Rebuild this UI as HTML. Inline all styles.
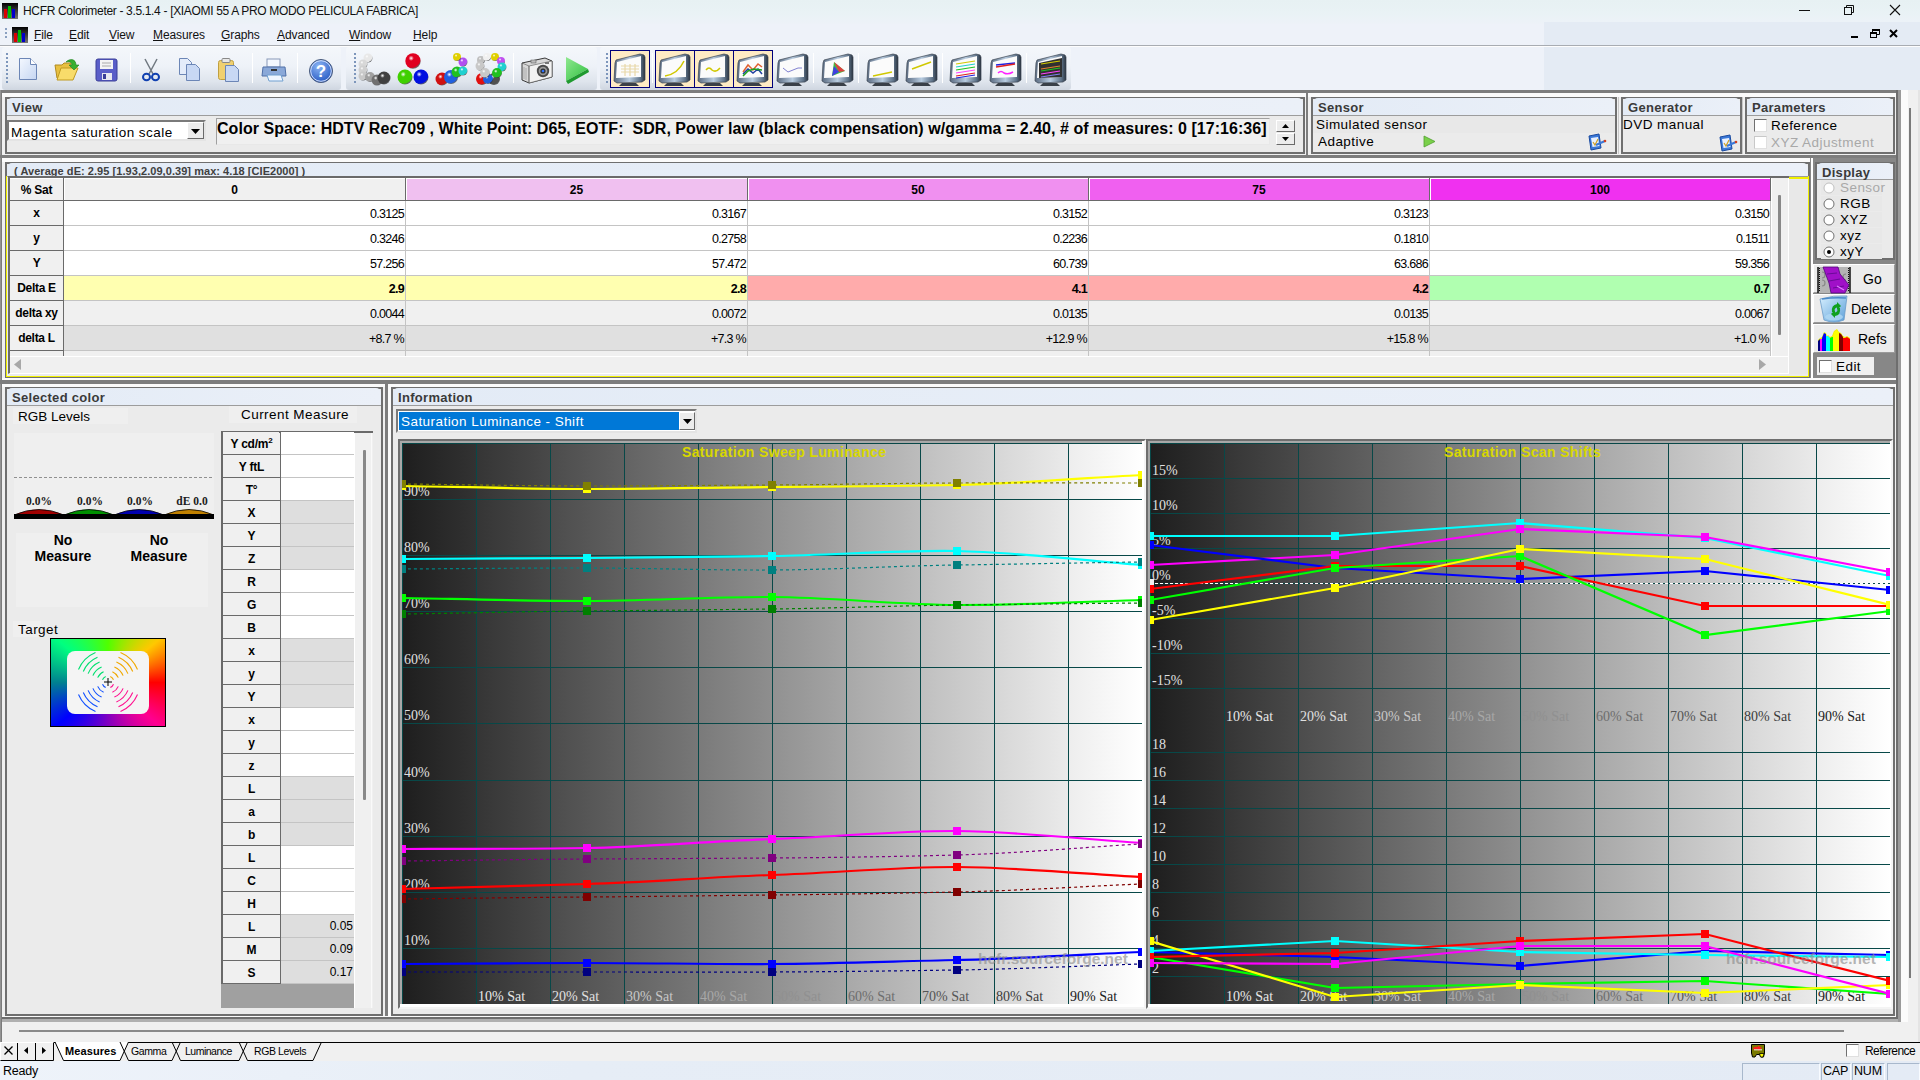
<!DOCTYPE html>
<html><head><meta charset="utf-8"><title>HCFR</title>
<style>
html,body{margin:0;padding:0;}
body{width:1920px;height:1080px;position:relative;overflow:hidden;background:#f0f0f0;font-family:'Liberation Sans', sans-serif;font-size:13px;color:#000;}
div{box-sizing:border-box;}
.u{text-decoration:underline;}
</style></head><body>
<div style="position:absolute;left:0px;top:0px;width:1920px;height:24px;background:linear-gradient(#e7f1f3,#e9f2f5 50%,#edf2f8);"></div><svg style="position:absolute;left:2px;top:3px" width="16" height="16" viewBox="0 0 16 16"><defs><linearGradient id="ig" x1="0" y1="0" x2="0" y2="1"><stop offset="0" stop-color="#000"/><stop offset="1" stop-color="#777"/></linearGradient></defs><rect x="0" y="0" width="16" height="16" fill="url(#ig)"/><rect x="2" y="6" width="3" height="9" fill="#d00"/><rect x="6" y="3" width="3" height="12" fill="#0b0"/><rect x="10" y="6" width="3" height="9" fill="#00c"/></svg><div style="position:absolute;left:23px;top:3px;white-space:nowrap;font-size:12px;letter-spacing:-0.33px;color:#111;top:4px;">HCFR Colorimeter - 3.5.1.4 - [XIAOMI 55 A PRO MODO PELICULA FABRICA]</div><svg style="position:absolute;left:1790px;top:0" width="130" height="22" viewBox="0 0 130 22"><line x1="9" y1="10.5" x2="20" y2="10.5" stroke="#111" stroke-width="1"/><rect x="54.5" y="7.5" width="7" height="7" fill="none" stroke="#111"/><path d="M56.5 7.5 V5.5 H63.5 V12.5 H61.5" fill="none" stroke="#111"/><path d="M100 5 L110 15 M110 5 L100 15" stroke="#111" stroke-width="1.1"/></svg><div style="position:absolute;left:0px;top:24px;width:1920px;height:21px;background:#eef2f9;"></div><div style="position:absolute;left:1544px;top:22px;width:376px;height:23px;background:#e4ebf4;"></div><div style="position:absolute;left:0px;top:45px;width:1920px;height:1px;background:#a8acb2;"></div><div style="position:absolute;left:0px;top:46px;width:1920px;height:1px;background:#fdfdfd;"></div><div style="position:absolute;left:5px;top:28px;width:2px;height:12px;background:repeating-linear-gradient(#8aa0c0 0 2px,transparent 2px 4px);"></div><svg style="position:absolute;left:12px;top:27px" width="16" height="16" viewBox="0 0 16 16"><defs><linearGradient id="ig" x1="0" y1="0" x2="0" y2="1"><stop offset="0" stop-color="#000"/><stop offset="1" stop-color="#777"/></linearGradient></defs><rect x="0" y="0" width="16" height="16" fill="url(#ig)"/><rect x="2" y="6" width="3" height="9" fill="#d00"/><rect x="6" y="3" width="3" height="12" fill="#0b0"/><rect x="10" y="6" width="3" height="9" fill="#00c"/></svg><div style="position:absolute;left:34px;top:28px;white-space:nowrap;font-size:12px;letter-spacing:-0.1px;color:#111;"><span class="u">F</span>ile</div><div style="position:absolute;left:69px;top:28px;white-space:nowrap;font-size:12px;letter-spacing:-0.1px;color:#111;"><span class="u">E</span>dit</div><div style="position:absolute;left:109px;top:28px;white-space:nowrap;font-size:12px;letter-spacing:-0.1px;color:#111;"><span class="u">V</span>iew</div><div style="position:absolute;left:153px;top:28px;white-space:nowrap;font-size:12px;letter-spacing:-0.1px;color:#111;"><span class="u">M</span>easures</div><div style="position:absolute;left:221px;top:28px;white-space:nowrap;font-size:12px;letter-spacing:-0.1px;color:#111;"><span class="u">G</span>raphs</div><div style="position:absolute;left:277px;top:28px;white-space:nowrap;font-size:12px;letter-spacing:-0.1px;color:#111;"><span class="u">A</span>dvanced</div><div style="position:absolute;left:349px;top:28px;white-space:nowrap;font-size:12px;letter-spacing:-0.1px;color:#111;"><span class="u">W</span>indow</div><div style="position:absolute;left:413px;top:28px;white-space:nowrap;font-size:12px;letter-spacing:-0.1px;color:#111;"><span class="u">H</span>elp</div><svg style="position:absolute;left:1845px;top:26" width="60" height="16" viewBox="0 0 60 16"><rect x="6" y="10" width="7" height="2" fill="#000"/><rect x="25.5" y="6.5" width="6" height="5" fill="none" stroke="#000"/><rect x="25" y="6" width="7" height="2" fill="#000"/><path d="M27.5 6 V3.5 H34.5 V8.5 H32" fill="none" stroke="#000"/><rect x="27" y="3" width="8" height="2" fill="#000"/><path d="M45 4 L52 11 M52 4 L45 11" stroke="#000" stroke-width="2"/></svg><div style="position:absolute;left:0px;top:47px;width:1920px;height:43px;background:#eef2f9;"></div><div style="position:absolute;left:1544px;top:47px;width:376px;height:43px;background:#e4ebf4;"></div><div style="position:absolute;left:2px;top:47px;width:339px;height:43px;background:linear-gradient(#f4f7fb 0%,#eef2f8 45%,#dfe5ed 80%,#cfd6e0 100%);border-radius:3px;"></div><div style="position:absolute;left:346px;top:47px;width:251px;height:43px;background:linear-gradient(#f4f7fb 0%,#eef2f8 45%,#dfe5ed 80%,#cfd6e0 100%);border-radius:3px;"></div><div style="position:absolute;left:600px;top:47px;width:471px;height:43px;background:linear-gradient(#f4f7fb 0%,#eef2f8 45%,#dfe5ed 80%,#cfd6e0 100%);border-radius:3px;"></div><div style="position:absolute;left:6px;top:53px;width:2px;height:30px;background:repeating-linear-gradient(#7d96bb 0 2px,transparent 2px 4px);"></div><div style="position:absolute;left:354px;top:53px;width:2px;height:30px;background:repeating-linear-gradient(#7d96bb 0 2px,transparent 2px 4px);"></div><div style="position:absolute;left:606px;top:53px;width:2px;height:30px;background:repeating-linear-gradient(#7d96bb 0 2px,transparent 2px 4px);"></div><div style="position:absolute;left:130px;top:53px;width:1px;height:30px;background:#c5ccd6;border-right:1px solid #fff;"></div><div style="position:absolute;left:252px;top:53px;width:1px;height:30px;background:#c5ccd6;border-right:1px solid #fff;"></div><div style="position:absolute;left:297px;top:53px;width:1px;height:30px;background:#c5ccd6;border-right:1px solid #fff;"></div><div style="position:absolute;left:513px;top:53px;width:1px;height:30px;background:#c5ccd6;border-right:1px solid #fff;"></div><div style="position:absolute;left:652px;top:53px;width:1px;height:30px;background:#c5ccd6;border-right:1px solid #fff;"></div><div style="position:absolute;left:813px;top:53px;width:1px;height:30px;background:#c5ccd6;border-right:1px solid #fff;"></div><div style="position:absolute;left:858px;top:53px;width:1px;height:30px;background:#c5ccd6;border-right:1px solid #fff;"></div><div style="position:absolute;left:942px;top:53px;width:1px;height:30px;background:#c5ccd6;border-right:1px solid #fff;"></div><div style="position:absolute;left:1026px;top:53px;width:1px;height:30px;background:#c5ccd6;border-right:1px solid #fff;"></div><div style="position:absolute;left:0px;top:90px;width:1920px;height:3px;background:#7d7d7d;"></div><div style="position:absolute;left:0px;top:93px;width:1920px;height:4px;background:#fbfbfb;"></div><svg style="position:absolute;left:18px;top:57px" width="20" height="24" viewBox="0 0 20 24"><defs><linearGradient id="nd" x1="0" y1="0" x2="1" y2="1"><stop offset="0" stop-color="#f4f8ff"/><stop offset="1" stop-color="#c5d6f2"/></linearGradient></defs><path d="M1.5 1.5 H12.5 L18.5 7.5 V22.5 H1.5 Z" fill="url(#nd)" stroke="#6c86b6"/><path d="M12.5 1.5 V7.5 H18.5" fill="#fff" stroke="#6c86b6"/></svg><svg style="position:absolute;left:54px;top:58px" width="26" height="24" viewBox="0 0 26 24"><path d="M1 7 H8 L10 5 H17 V20 H3 Z" fill="#e8c040" stroke="#b08a20"/><path d="M3 22 L7 10 H24 L19 22 Z" fill="#f8dc6a" stroke="#c09a20"/><path d="M12 4 C16 0 22 1 22 7 L25 7 L20 12 L15 7 L18 7 C18 4 15 3 12 4 Z" fill="#38b030" stroke="#208020" stroke-width="0.6"/></svg><svg style="position:absolute;left:95px;top:58px" width="24" height="24" viewBox="0 0 24 24"><rect x="1" y="1" width="21" height="22" rx="2" fill="#5a5ec8" stroke="#3a3e98"/><rect x="5" y="2" width="13" height="9" fill="#f4f4f4"/><line x1="7" y1="5" x2="16" y2="5" stroke="#aaa"/><line x1="7" y1="8" x2="16" y2="8" stroke="#aaa"/><rect x="7" y="15" width="10" height="7" fill="#e8e8f0"/><rect x="8" y="16" width="3" height="5" fill="#3a3e98"/></svg><svg style="position:absolute;left:141px;top:58px" width="20" height="24" viewBox="0 0 20 24"><path d="M4 1 L12 16 M16 1 L8 16" stroke="#707880" stroke-width="1.5"/><ellipse cx="5.5" cy="19" rx="3.5" ry="3.3" fill="none" stroke="#1040b0" stroke-width="2"/><ellipse cx="14.5" cy="19" rx="3.5" ry="3.3" fill="none" stroke="#1040b0" stroke-width="2"/></svg><svg style="position:absolute;left:178px;top:57px" width="24" height="26" viewBox="0 0 24 26"><path d="M1.5 1.5 H9.5 L13.5 5.5 V17.5 H1.5 Z" fill="#e4ecfa" stroke="#6c86b6"/><path d="M8.5 7.5 H17.5 L21.5 11.5 V23.5 H8.5 Z" fill="#c8d8f4" stroke="#6c86b6"/></svg><svg style="position:absolute;left:217px;top:57px" width="24" height="26" viewBox="0 0 24 26"><rect x="1.5" y="3.5" width="15" height="19" rx="2" fill="#f0d070" stroke="#c0a040"/><rect x="5" y="1.5" width="8" height="4" rx="1" fill="#e8e8e8" stroke="#888"/><path d="M8.5 8.5 H17.5 L21.5 12.5 V24.5 H8.5 Z" fill="#c8d8f4" stroke="#6c86b6"/></svg><svg style="position:absolute;left:261px;top:58px" width="26" height="24" viewBox="0 0 26 24"><rect x="6" y="1" width="13" height="8" fill="#f4f8ff" stroke="#8898b8"/><path d="M2 9 H24 L25 18 H1 Z" fill="#8aa8d8" stroke="#5070a8"/><rect x="10" y="11" width="6" height="2" fill="#333"/><path d="M6 17 H20 L22 23 H8 Z" fill="#f0f6ff" stroke="#70a0d0"/></svg><svg style="position:absolute;left:308px;top:58px" width="26" height="26" viewBox="0 0 26 26"><defs><radialGradient id="hg" cx="0.4" cy="0.3" r="0.7"><stop offset="0" stop-color="#8ab4f4"/><stop offset="1" stop-color="#2a5cc4"/></radialGradient></defs><circle cx="13" cy="13" r="11.5" fill="url(#hg)" stroke="#4a5a78"/><circle cx="13" cy="13" r="10.3" fill="none" stroke="#dce8ff" stroke-width="0.9"/><text x="13" y="19" font-family="'Liberation Sans', sans-serif" font-weight="bold" font-size="17" fill="#fff" text-anchor="middle">?</text></svg><svg style="position:absolute;left:357px;top:53px" width="34" height="34" viewBox="0 0 34 34"><defs><radialGradient id="bl1" cx="0.38" cy="0.32" r="0.7"><stop offset="0" stop-color="#fff"/><stop offset="0.25" stop-color="#e8e8e8"/><stop offset="0.85" stop-color="#e8e8e8"/><stop offset="1" stop-color="#222" stop-opacity="0.6"/></radialGradient></defs><circle cx="11" cy="5" r="4.5" fill="url(#bl1)"/><defs><radialGradient id="bl2" cx="0.38" cy="0.32" r="0.7"><stop offset="0" stop-color="#fff"/><stop offset="0.25" stop-color="#d8d8d8"/><stop offset="0.85" stop-color="#d8d8d8"/><stop offset="1" stop-color="#222" stop-opacity="0.6"/></radialGradient></defs><circle cx="6" cy="11" r="4.5" fill="url(#bl2)"/><defs><radialGradient id="bl3" cx="0.38" cy="0.32" r="0.7"><stop offset="0" stop-color="#fff"/><stop offset="0.25" stop-color="#d0d0d0"/><stop offset="0.85" stop-color="#d0d0d0"/><stop offset="1" stop-color="#222" stop-opacity="0.6"/></radialGradient></defs><circle cx="6" cy="17" r="4.5" fill="url(#bl3)"/><defs><radialGradient id="bl4" cx="0.38" cy="0.32" r="0.7"><stop offset="0" stop-color="#fff"/><stop offset="0.25" stop-color="#c8c8c8"/><stop offset="0.85" stop-color="#c8c8c8"/><stop offset="1" stop-color="#222" stop-opacity="0.6"/></radialGradient></defs><circle cx="6" cy="23" r="4.5" fill="url(#bl4)"/><defs><radialGradient id="bl5" cx="0.38" cy="0.32" r="0.7"><stop offset="0" stop-color="#fff"/><stop offset="0.25" stop-color="#a0a0a0"/><stop offset="0.85" stop-color="#a0a0a0"/><stop offset="1" stop-color="#222" stop-opacity="0.6"/></radialGradient></defs><circle cx="13" cy="24" r="5" fill="url(#bl5)"/><defs><radialGradient id="bl6" cx="0.38" cy="0.32" r="0.7"><stop offset="0" stop-color="#fff"/><stop offset="0.25" stop-color="#707070"/><stop offset="0.85" stop-color="#707070"/><stop offset="1" stop-color="#222" stop-opacity="0.6"/></radialGradient></defs><circle cx="20" cy="27" r="5.5" fill="url(#bl6)"/><defs><radialGradient id="bl7" cx="0.38" cy="0.32" r="0.7"><stop offset="0" stop-color="#fff"/><stop offset="0.25" stop-color="#404040"/><stop offset="0.85" stop-color="#404040"/><stop offset="1" stop-color="#222" stop-opacity="0.6"/></radialGradient></defs><circle cx="27" cy="25" r="6.5" fill="url(#bl7)"/></svg><svg style="position:absolute;left:396px;top:53px" width="34" height="34" viewBox="0 0 34 34"><defs><radialGradient id="bl8" cx="0.38" cy="0.32" r="0.7"><stop offset="0" stop-color="#fff"/><stop offset="0.25" stop-color="#e00020"/><stop offset="0.85" stop-color="#e00020"/><stop offset="1" stop-color="#222" stop-opacity="0.6"/></radialGradient></defs><circle cx="17" cy="8" r="7.7" fill="url(#bl8)"/><defs><radialGradient id="bl9" cx="0.38" cy="0.32" r="0.7"><stop offset="0" stop-color="#fff"/><stop offset="0.25" stop-color="#40d000"/><stop offset="0.85" stop-color="#40d000"/><stop offset="1" stop-color="#222" stop-opacity="0.6"/></radialGradient></defs><circle cx="9" cy="24" r="7.5" fill="url(#bl9)"/><defs><radialGradient id="bl10" cx="0.38" cy="0.32" r="0.7"><stop offset="0" stop-color="#fff"/><stop offset="0.25" stop-color="#0010e0"/><stop offset="0.85" stop-color="#0010e0"/><stop offset="1" stop-color="#222" stop-opacity="0.6"/></radialGradient></defs><circle cx="25" cy="24" r="7.5" fill="url(#bl10)"/></svg><svg style="position:absolute;left:435px;top:53px" width="34" height="34" viewBox="0 0 34 34"><defs><radialGradient id="bl11" cx="0.38" cy="0.32" r="0.7"><stop offset="0" stop-color="#fff"/><stop offset="0.25" stop-color="#d01010"/><stop offset="0.85" stop-color="#d01010"/><stop offset="1" stop-color="#222" stop-opacity="0.6"/></radialGradient></defs><circle cx="7" cy="26" r="6.5" fill="url(#bl11)"/><defs><radialGradient id="bl12" cx="0.38" cy="0.32" r="0.7"><stop offset="0" stop-color="#fff"/><stop offset="0.25" stop-color="#2060e0"/><stop offset="0.85" stop-color="#2060e0"/><stop offset="1" stop-color="#222" stop-opacity="0.6"/></radialGradient></defs><circle cx="16" cy="24" r="7" fill="url(#bl12)"/><defs><radialGradient id="bl13" cx="0.38" cy="0.32" r="0.7"><stop offset="0" stop-color="#fff"/><stop offset="0.25" stop-color="#20c020"/><stop offset="0.85" stop-color="#20c020"/><stop offset="1" stop-color="#222" stop-opacity="0.6"/></radialGradient></defs><circle cx="22" cy="19" r="5.5" fill="url(#bl13)"/><defs><radialGradient id="bl14" cx="0.38" cy="0.32" r="0.7"><stop offset="0" stop-color="#fff"/><stop offset="0.25" stop-color="#20d0d0"/><stop offset="0.85" stop-color="#20d0d0"/><stop offset="1" stop-color="#222" stop-opacity="0.6"/></radialGradient></defs><circle cx="28" cy="18" r="4.5" fill="url(#bl14)"/><defs><radialGradient id="bl15" cx="0.38" cy="0.32" r="0.7"><stop offset="0" stop-color="#fff"/><stop offset="0.25" stop-color="#b050f0"/><stop offset="0.85" stop-color="#b050f0"/><stop offset="1" stop-color="#222" stop-opacity="0.6"/></radialGradient></defs><circle cx="28" cy="9" r="4.5" fill="url(#bl15)"/><defs><radialGradient id="bl16" cx="0.38" cy="0.32" r="0.7"><stop offset="0" stop-color="#fff"/><stop offset="0.25" stop-color="#e0d000"/><stop offset="0.85" stop-color="#e0d000"/><stop offset="1" stop-color="#222" stop-opacity="0.6"/></radialGradient></defs><circle cx="22" cy="4" r="4" fill="url(#bl16)"/></svg><svg style="position:absolute;left:474px;top:53px" width="34" height="34" viewBox="0 0 34 34"><defs><radialGradient id="bl17" cx="0.38" cy="0.32" r="0.7"><stop offset="0" stop-color="#fff"/><stop offset="0.25" stop-color="#505050"/><stop offset="0.85" stop-color="#505050"/><stop offset="1" stop-color="#222" stop-opacity="0.6"/></radialGradient></defs><circle cx="20" cy="26" r="6" fill="url(#bl17)"/><defs><radialGradient id="bl18" cx="0.38" cy="0.32" r="0.7"><stop offset="0" stop-color="#fff"/><stop offset="0.25" stop-color="#e01010"/><stop offset="0.85" stop-color="#e01010"/><stop offset="1" stop-color="#222" stop-opacity="0.6"/></radialGradient></defs><circle cx="8" cy="26" r="6" fill="url(#bl18)"/><defs><radialGradient id="bl19" cx="0.38" cy="0.32" r="0.7"><stop offset="0" stop-color="#fff"/><stop offset="0.25" stop-color="#2060e0"/><stop offset="0.85" stop-color="#2060e0"/><stop offset="1" stop-color="#222" stop-opacity="0.6"/></radialGradient></defs><circle cx="14" cy="26" r="5" fill="url(#bl19)"/><defs><radialGradient id="bl20" cx="0.38" cy="0.32" r="0.7"><stop offset="0" stop-color="#fff"/><stop offset="0.25" stop-color="#c0c0c0"/><stop offset="0.85" stop-color="#c0c0c0"/><stop offset="1" stop-color="#222" stop-opacity="0.6"/></radialGradient></defs><circle cx="7" cy="7" r="4" fill="url(#bl20)"/><defs><radialGradient id="bl21" cx="0.38" cy="0.32" r="0.7"><stop offset="0" stop-color="#fff"/><stop offset="0.25" stop-color="#f0f0f0"/><stop offset="0.85" stop-color="#f0f0f0"/><stop offset="1" stop-color="#222" stop-opacity="0.6"/></radialGradient></defs><circle cx="13" cy="4" r="4" fill="url(#bl21)"/><defs><radialGradient id="bl22" cx="0.38" cy="0.32" r="0.7"><stop offset="0" stop-color="#fff"/><stop offset="0.25" stop-color="#e0d000"/><stop offset="0.85" stop-color="#e0d000"/><stop offset="1" stop-color="#222" stop-opacity="0.6"/></radialGradient></defs><circle cx="21" cy="4" r="4" fill="url(#bl22)"/><defs><radialGradient id="bl23" cx="0.38" cy="0.32" r="0.7"><stop offset="0" stop-color="#fff"/><stop offset="0.25" stop-color="#c050f0"/><stop offset="0.85" stop-color="#c050f0"/><stop offset="1" stop-color="#222" stop-opacity="0.6"/></radialGradient></defs><circle cx="27" cy="8" r="4" fill="url(#bl23)"/><defs><radialGradient id="bl24" cx="0.38" cy="0.32" r="0.7"><stop offset="0" stop-color="#fff"/><stop offset="0.25" stop-color="#20d0d0"/><stop offset="0.85" stop-color="#20d0d0"/><stop offset="1" stop-color="#222" stop-opacity="0.6"/></radialGradient></defs><circle cx="28" cy="14" r="4.5" fill="url(#bl24)"/><defs><radialGradient id="bl25" cx="0.38" cy="0.32" r="0.7"><stop offset="0" stop-color="#fff"/><stop offset="0.25" stop-color="#c8c8c8"/><stop offset="0.85" stop-color="#c8c8c8"/><stop offset="1" stop-color="#222" stop-opacity="0.6"/></radialGradient></defs><circle cx="6" cy="13" r="4.5" fill="url(#bl25)"/><defs><radialGradient id="bl26" cx="0.38" cy="0.32" r="0.7"><stop offset="0" stop-color="#fff"/><stop offset="0.25" stop-color="#c8c8c8"/><stop offset="0.85" stop-color="#c8c8c8"/><stop offset="1" stop-color="#222" stop-opacity="0.6"/></radialGradient></defs><circle cx="11" cy="20" r="5" fill="url(#bl26)"/><defs><radialGradient id="bl27" cx="0.38" cy="0.32" r="0.7"><stop offset="0" stop-color="#fff"/><stop offset="0.25" stop-color="#20c020"/><stop offset="0.85" stop-color="#20c020"/><stop offset="1" stop-color="#222" stop-opacity="0.6"/></radialGradient></defs><circle cx="23" cy="20" r="5" fill="url(#bl27)"/></svg><svg style="position:absolute;left:520px;top:54px" width="34" height="32" viewBox="0 0 34 32"><path d="M2 9 L25 4 L32 7 L32 23 L9 29 L2 26 Z" fill="#d8d8d8" stroke="#3a3a3a" stroke-width="1"/><path d="M9 12 L32 7 L32 23 L9 29 Z" fill="#f2f2f2" stroke="#555" stroke-width="0.6"/><path d="M2 9 L9 12 L9 29" fill="none" stroke="#555" stroke-width="0.6"/><path d="M4 13 V25 M6 14 V26" stroke="#999" stroke-width="0.7"/><circle cx="23" cy="17" r="6.2" fill="#4a4a4a"/><circle cx="23" cy="17" r="4.3" fill="#9a9a9a"/><circle cx="23" cy="17" r="2.6" fill="#303030"/><circle cx="23" cy="17" r="1.3" fill="#2a70ff"/><rect x="11" y="6" width="5" height="3" fill="#bbb" stroke="#555" stroke-width="0.5"/><rect x="25" y="8" width="4" height="2" fill="#777"/></svg><svg style="position:absolute;left:564px;top:55px" width="28" height="30" viewBox="0 0 28 30"><defs><linearGradient id="pg" x1="0" y1="0" x2="1" y2="1"><stop offset="0" stop-color="#90e890"/><stop offset="1" stop-color="#30c040"/></linearGradient></defs><path d="M2 2 L24 14 L2 26 Z" fill="url(#pg)"/><path d="M2 26 L24 14 L25 17 L4 29 Z" fill="#1f9a2f"/></svg><div style="position:absolute;left:610px;top:50px;width:40px;height:38px;background:#feebc4;border:1px solid #00007a;"></div><svg style="position:absolute;left:613px;top:52px" width="34" height="35" viewBox="0 0 34 35"><defs><linearGradient id="mg610" x1="0" y1="0" x2="1" y2="0"><stop offset="0" stop-color="#5a6a80"/><stop offset="0.5" stop-color="#b8cce0"/><stop offset="0.85" stop-color="#60748a"/><stop offset="1" stop-color="#2a3440"/></linearGradient></defs><path d="M3 8 L27 2 L31 3 L32 5 L32 28 L29 30 L4 31 L1 29 L2 11 Z" fill="url(#mg610)" stroke="#3a4450" stroke-width="0.7"/><path d="M4 10 L28 4 L28 25 L3 26 Z" fill="#fbfbfb"/><path d="M8 14 H26 M8 17 H26 M8 20 H26 M12 12 V24 M17 12 V24 M22 12 V24" stroke="#e8d8a8" stroke-width="1.2"/><path d="M9 31 L23 31 L26 34 L6 34 Z" fill="#3a4048"/></svg><div style="position:absolute;left:655px;top:50px;width:40px;height:38px;background:#feebc4;border:1px solid #00007a;"></div><svg style="position:absolute;left:658px;top:52px" width="34" height="35" viewBox="0 0 34 35"><defs><linearGradient id="mg655" x1="0" y1="0" x2="1" y2="0"><stop offset="0" stop-color="#5a6a80"/><stop offset="0.5" stop-color="#b8cce0"/><stop offset="0.85" stop-color="#60748a"/><stop offset="1" stop-color="#2a3440"/></linearGradient></defs><path d="M3 8 L27 2 L31 3 L32 5 L32 28 L29 30 L4 31 L1 29 L2 11 Z" fill="url(#mg655)" stroke="#3a4450" stroke-width="0.7"/><path d="M4 10 L28 4 L28 25 L3 26 Z" fill="#fbfbfb"/><path d="M7 24 Q20 22 26 9" fill="none" stroke="#d0c800" stroke-width="1.5"/><path d="M9 31 L23 31 L26 34 L6 34 Z" fill="#3a4048"/></svg><div style="position:absolute;left:694px;top:50px;width:40px;height:38px;background:#feebc4;border:1px solid #00007a;"></div><svg style="position:absolute;left:697px;top:52px" width="34" height="35" viewBox="0 0 34 35"><defs><linearGradient id="mg694" x1="0" y1="0" x2="1" y2="0"><stop offset="0" stop-color="#5a6a80"/><stop offset="0.5" stop-color="#b8cce0"/><stop offset="0.85" stop-color="#60748a"/><stop offset="1" stop-color="#2a3440"/></linearGradient></defs><path d="M3 8 L27 2 L31 3 L32 5 L32 28 L29 30 L4 31 L1 29 L2 11 Z" fill="url(#mg694)" stroke="#3a4450" stroke-width="0.7"/><path d="M4 10 L28 4 L28 25 L3 26 Z" fill="#fbfbfb"/><path d="M9 18 Q12 14 15 18 Q19 21 23 16" fill="none" stroke="#d0c800" stroke-width="1.5"/><path d="M9 31 L23 31 L26 34 L6 34 Z" fill="#3a4048"/></svg><div style="position:absolute;left:733px;top:50px;width:40px;height:38px;background:#feebc4;border:1px solid #00007a;"></div><svg style="position:absolute;left:736px;top:52px" width="34" height="35" viewBox="0 0 34 35"><defs><linearGradient id="mg733" x1="0" y1="0" x2="1" y2="0"><stop offset="0" stop-color="#5a6a80"/><stop offset="0.5" stop-color="#b8cce0"/><stop offset="0.85" stop-color="#60748a"/><stop offset="1" stop-color="#2a3440"/></linearGradient></defs><path d="M3 8 L27 2 L31 3 L32 5 L32 28 L29 30 L4 31 L1 29 L2 11 Z" fill="url(#mg733)" stroke="#3a4450" stroke-width="0.7"/><path d="M4 10 L28 4 L28 25 L3 26 Z" fill="#fbfbfb"/><path d="M7 20 L12 13 L17 18 L22 12 L26 15" fill="none" stroke="#e06030" stroke-width="1.5"/><path d="M7 22 L12 17 L17 21 L22 17 L26 22" fill="none" stroke="#2040a0" stroke-width="1.5"/><path d="M7 24 L12 19 L18 17 L26 18" fill="none" stroke="#20a020" stroke-width="1.5"/><path d="M9 31 L23 31 L26 34 L6 34 Z" fill="#3a4048"/></svg><svg style="position:absolute;left:776px;top:52px" width="34" height="35" viewBox="0 0 34 35"><defs><linearGradient id="mg773" x1="0" y1="0" x2="1" y2="0"><stop offset="0" stop-color="#5a6a80"/><stop offset="0.5" stop-color="#b8cce0"/><stop offset="0.85" stop-color="#60748a"/><stop offset="1" stop-color="#2a3440"/></linearGradient></defs><path d="M3 8 L27 2 L31 3 L32 5 L32 28 L29 30 L4 31 L1 29 L2 11 Z" fill="url(#mg773)" stroke="#3a4450" stroke-width="0.7"/><path d="M4 10 L28 4 L28 25 L3 26 Z" fill="#fbfbfb"/><path d="M7 16 L12 20 L17 18 L22 16 L26 16" fill="none" stroke="#8080d0" stroke-width="1"/><path d="M9 31 L23 31 L26 34 L6 34 Z" fill="#3a4048"/></svg><svg style="position:absolute;left:821px;top:52px" width="34" height="35" viewBox="0 0 34 35"><defs><linearGradient id="mg818" x1="0" y1="0" x2="1" y2="0"><stop offset="0" stop-color="#5a6a80"/><stop offset="0.5" stop-color="#b8cce0"/><stop offset="0.85" stop-color="#60748a"/><stop offset="1" stop-color="#2a3440"/></linearGradient></defs><path d="M3 8 L27 2 L31 3 L32 5 L32 28 L29 30 L4 31 L1 29 L2 11 Z" fill="url(#mg818)" stroke="#3a4450" stroke-width="0.7"/><path d="M4 10 L28 4 L28 25 L3 26 Z" fill="#fbfbfb"/><path d="M11 24 L13 10 L24 19 Z" fill="#40c040"/><path d="M13 10 L24 19 L18 20 Z" fill="#e04040"/><path d="M11 24 L18 20 L13 14 Z" fill="#4040e0"/><path d="M9 31 L23 31 L26 34 L6 34 Z" fill="#3a4048"/></svg><svg style="position:absolute;left:866px;top:52px" width="34" height="35" viewBox="0 0 34 35"><defs><linearGradient id="mg863" x1="0" y1="0" x2="1" y2="0"><stop offset="0" stop-color="#5a6a80"/><stop offset="0.5" stop-color="#b8cce0"/><stop offset="0.85" stop-color="#60748a"/><stop offset="1" stop-color="#2a3440"/></linearGradient></defs><path d="M3 8 L27 2 L31 3 L32 5 L32 28 L29 30 L4 31 L1 29 L2 11 Z" fill="url(#mg863)" stroke="#3a4450" stroke-width="0.7"/><path d="M4 10 L28 4 L28 25 L3 26 Z" fill="#fbfbfb"/><path d="M7 24 L26 20" stroke="#d0c800" stroke-width="1.5"/><path d="M9 31 L23 31 L26 34 L6 34 Z" fill="#3a4048"/></svg><svg style="position:absolute;left:905px;top:52px" width="34" height="35" viewBox="0 0 34 35"><defs><linearGradient id="mg902" x1="0" y1="0" x2="1" y2="0"><stop offset="0" stop-color="#5a6a80"/><stop offset="0.5" stop-color="#b8cce0"/><stop offset="0.85" stop-color="#60748a"/><stop offset="1" stop-color="#2a3440"/></linearGradient></defs><path d="M3 8 L27 2 L31 3 L32 5 L32 28 L29 30 L4 31 L1 29 L2 11 Z" fill="url(#mg902)" stroke="#3a4450" stroke-width="0.7"/><path d="M4 10 L28 4 L28 25 L3 26 Z" fill="#fbfbfb"/><path d="M7 17 L26 10" stroke="#d0c800" stroke-width="1.5"/><path d="M9 31 L23 31 L26 34 L6 34 Z" fill="#3a4048"/></svg><svg style="position:absolute;left:949px;top:52px" width="34" height="35" viewBox="0 0 34 35"><defs><linearGradient id="mg946" x1="0" y1="0" x2="1" y2="0"><stop offset="0" stop-color="#5a6a80"/><stop offset="0.5" stop-color="#b8cce0"/><stop offset="0.85" stop-color="#60748a"/><stop offset="1" stop-color="#2a3440"/></linearGradient></defs><path d="M3 8 L27 2 L31 3 L32 5 L32 28 L29 30 L4 31 L1 29 L2 11 Z" fill="url(#mg946)" stroke="#3a4450" stroke-width="0.7"/><path d="M4 10 L28 4 L28 25 L3 26 Z" fill="#fbfbfb"/><path d="M7 12 L26 9" stroke="#d0c800" stroke-width="1.2"/><path d="M7 15 L26 12" stroke="#20d0d0" stroke-width="1.2"/><path d="M7 18 L26 15" stroke="#20c020" stroke-width="1.2"/><path d="M7 21 L26 18" stroke="#ff40ff" stroke-width="1.2"/><path d="M7 24 L26 21" stroke="#e02020" stroke-width="1.2"/><path d="M7 26 L26 23" stroke="#2020e0" stroke-width="1.2"/><path d="M9 31 L23 31 L26 34 L6 34 Z" fill="#3a4048"/></svg><svg style="position:absolute;left:989px;top:52px" width="34" height="35" viewBox="0 0 34 35"><defs><linearGradient id="mg986" x1="0" y1="0" x2="1" y2="0"><stop offset="0" stop-color="#5a6a80"/><stop offset="0.5" stop-color="#b8cce0"/><stop offset="0.85" stop-color="#60748a"/><stop offset="1" stop-color="#2a3440"/></linearGradient></defs><path d="M3 8 L27 2 L31 3 L32 5 L32 28 L29 30 L4 31 L1 29 L2 11 Z" fill="url(#mg986)" stroke="#3a4450" stroke-width="0.7"/><path d="M4 10 L28 4 L28 25 L3 26 Z" fill="#fbfbfb"/><path d="M7 13 L26 11" stroke="#2020e0" stroke-width="1.5"/><path d="M7 15 L26 12" stroke="#e02020" stroke-width="1.5"/><path d="M9 21 Q12 18 15 21 Q19 23 24 20" fill="none" stroke="#ff20ff" stroke-width="1.5"/><path d="M9 31 L23 31 L26 34 L6 34 Z" fill="#3a4048"/></svg><svg style="position:absolute;left:1034px;top:52px" width="34" height="35" viewBox="0 0 34 35"><defs><linearGradient id="mg1031" x1="0" y1="0" x2="1" y2="0"><stop offset="0" stop-color="#5a6a80"/><stop offset="0.5" stop-color="#b8cce0"/><stop offset="0.85" stop-color="#60748a"/><stop offset="1" stop-color="#2a3440"/></linearGradient></defs><path d="M3 8 L27 2 L31 3 L32 5 L32 28 L29 30 L4 31 L1 29 L2 11 Z" fill="url(#mg1031)" stroke="#3a4450" stroke-width="0.7"/><path d="M4 10 L28 4 L28 25 L3 26 Z" fill="#fbfbfb"/><path d="M5 11 L28 6 L28 25 L5 26 Z" fill="#303030"/><path d="M7 12 L26 9" stroke="#d0c800" stroke-width="1.2"/><path d="M7 17 L26 14" stroke="#e08030" stroke-width="1.2"/><path d="M7 19 L26 16" stroke="#20c020" stroke-width="1.2"/><path d="M7 22 L26 19" stroke="#ff40ff" stroke-width="1.2"/><path d="M7 25 L26 22" stroke="#8080f0" stroke-width="1.2"/><path d="M9 31 L23 31 L26 34 L6 34 Z" fill="#3a4048"/></svg><div style="position:absolute;left:5px;top:97px;width:1300px;height:57px;background:#ebebeb;border:2px solid #6f6f6f;border-right-width:2px;"></div><div style="position:absolute;left:7px;top:98px;width:1296px;height:18px;background:linear-gradient(90deg,#e3ebf6,#ebf0f8);border-radius:5px 5px 0 0;border-bottom:1px solid #9c9c9c;"></div><div style="position:absolute;left:12px;top:100px;white-space:nowrap;font-weight:bold;font-size:13px;color:#3a3a3a;letter-spacing:0.3px;">View</div><div style="position:absolute;left:7px;top:120px;width:199px;height:21px;background:#fff;border:2px solid #7a7a7a;border-right-color:#e4e4e4;border-bottom-color:#e4e4e4;"></div><div style="position:absolute;left:11px;top:124px;white-space:nowrap;font-size:13.5px;letter-spacing:0.45px;margin-top:1px;">Magenta saturation scale</div><div style="position:absolute;left:187px;top:122px;width:17px;height:17px;background:#ececec;border:1px solid #fff;border-right-color:#6a6a6a;border-bottom-color:#6a6a6a;"></div><svg style="position:absolute;left:191px;top:129px" width="9" height="5" viewBox="0 0 9 5"><path d="M0 0 H9 L4.5 5 Z" fill="#000"/></svg><div style="position:absolute;left:216px;top:118px;width:1054px;height:27px;background:#f0f0f0;border:1px solid #e8e8e8;border-left-color:#a0a0a0;border-top-color:#a0a0a0;"></div><div style="position:absolute;left:217px;top:120px;white-space:nowrap;font-size:16px;font-weight:bold;letter-spacing:0.04px;">Color Space: HDTV Rec709 , White Point: D65, EOTF: &nbsp;SDR, Power law (black compensation) w/gamma = 2.40, # of measures: 0 [17:16:36]</div><div style="position:absolute;left:1276px;top:120px;width:19px;height:12px;background:#ececec;border:1px solid #fff;border-right-color:#6a6a6a;border-bottom-color:#6a6a6a;"></div><div style="position:absolute;left:1276px;top:133px;width:19px;height:12px;background:#ececec;border:1px solid #fff;border-right-color:#6a6a6a;border-bottom-color:#6a6a6a;"></div><svg style="position:absolute;left:1282px;top:124px" width="7" height="4" viewBox="0 0 7 4"><path d="M0 4 H7 L3.5 0 Z" fill="#000"/></svg><svg style="position:absolute;left:1282px;top:137px" width="7" height="4" viewBox="0 0 7 4"><path d="M0 0 H7 L3.5 4 Z" fill="#000"/></svg><div style="position:absolute;left:1306px;top:93px;width:2px;height:62px;background:#7d7d7d;"></div><div style="position:absolute;left:1618px;top:97px;width:1px;height:57px;background:#c8c8c8;"></div><div style="position:absolute;left:1742px;top:97px;width:1px;height:57px;background:#c8c8c8;"></div><div style="position:absolute;left:1311px;top:97px;width:306px;height:57px;background:#ebebeb;border:2px solid #6f6f6f;border-right-width:2px;"></div><div style="position:absolute;left:1313px;top:98px;width:302px;height:18px;background:linear-gradient(90deg,#e3ebf6,#ebf0f8);border-radius:5px 5px 0 0;border-bottom:1px solid #9c9c9c;"></div><div style="position:absolute;left:1318px;top:100px;white-space:nowrap;font-weight:bold;font-size:13px;color:#3a3a3a;letter-spacing:0.3px;">Sensor</div><div style="position:absolute;left:1313px;top:116px;width:302px;height:17px;background:#e8e8e8;"></div><div style="position:absolute;left:1316px;top:116px;white-space:nowrap;font-size:13.5px;letter-spacing:0.45px;margin-top:1px;">Simulated sensor</div><div style="position:absolute;left:1318px;top:133px;white-space:nowrap;font-size:13.5px;letter-spacing:0.45px;margin-top:1px;">Adaptive</div><svg style="position:absolute;left:1423px;top:135px" width="13" height="13" viewBox="0 0 13 13"><path d="M1 1 L12 6.5 L1 12 Z" fill="#7ad04a" stroke="#50a030" stroke-width="0.8"/></svg><svg style="position:absolute;left:1587px;top:133px" width="20" height="18" viewBox="0 0 20 18"><path d="M2 3 L12 1 L14 15 L4 17 Z" fill="#3a78d8" stroke="#1a4aa0"/><path d="M4 5 L11 4 L12.5 13 L5.5 14 Z" fill="#e8f0ff"/><path d="M6 9 L8 12 L11 6" fill="none" stroke="#d0a020" stroke-width="1.2"/><path d="M9 12 L18 8" stroke="#3a78d8" stroke-width="2"/><circle cx="18" cy="8" r="1.3" fill="#d04020"/></svg><div style="position:absolute;left:1621px;top:97px;width:121px;height:57px;background:#ebebeb;border:2px solid #6f6f6f;border-right-width:2px;"></div><div style="position:absolute;left:1623px;top:98px;width:117px;height:18px;background:linear-gradient(90deg,#e3ebf6,#ebf0f8);border-radius:5px 5px 0 0;border-bottom:1px solid #9c9c9c;"></div><div style="position:absolute;left:1628px;top:100px;white-space:nowrap;font-weight:bold;font-size:13px;color:#3a3a3a;letter-spacing:0.3px;">Generator</div><div style="position:absolute;left:1623px;top:116px;white-space:nowrap;font-size:13.5px;letter-spacing:0.45px;margin-top:1px;">DVD manual</div><svg style="position:absolute;left:1718px;top:134px" width="20" height="18" viewBox="0 0 20 18"><path d="M2 3 L12 1 L14 15 L4 17 Z" fill="#3a78d8" stroke="#1a4aa0"/><path d="M4 5 L11 4 L12.5 13 L5.5 14 Z" fill="#e8f0ff"/><path d="M6 9 L8 12 L11 6" fill="none" stroke="#d0a020" stroke-width="1.2"/><path d="M9 12 L18 8" stroke="#3a78d8" stroke-width="2"/><circle cx="18" cy="8" r="1.3" fill="#d04020"/></svg><div style="position:absolute;left:1745px;top:97px;width:150px;height:57px;background:#ebebeb;border:2px solid #6f6f6f;border-right-width:2px;"></div><div style="position:absolute;left:1747px;top:98px;width:146px;height:18px;background:linear-gradient(90deg,#e3ebf6,#ebf0f8);border-radius:5px 5px 0 0;border-bottom:1px solid #9c9c9c;"></div><div style="position:absolute;left:1752px;top:100px;white-space:nowrap;font-weight:bold;font-size:13px;color:#3a3a3a;letter-spacing:0.3px;">Parameters</div><div style="position:absolute;left:1754px;top:119px;width:13px;height:13px;background:#fff;border:1px solid #707070;border-right-color:#e0e0e0;border-bottom-color:#e0e0e0;"></div><div style="position:absolute;left:1771px;top:117px;white-space:nowrap;font-size:13.5px;letter-spacing:0.45px;margin-top:1px;">Reference</div><div style="position:absolute;left:1754px;top:136px;width:13px;height:13px;background:#fff;border:1px solid #c8c8c8;border-right-color:#e0e0e0;border-bottom-color:#e0e0e0;"></div><div style="position:absolute;left:1771px;top:134px;white-space:nowrap;font-size:13.5px;letter-spacing:0.45px;margin-top:1px;color:#a8a8a8;">XYZ Adjustment</div><div style="position:absolute;left:0px;top:0px;width:2px;height:1042px;background:linear-gradient(90deg,#a0a0a0,#6f6f6f);top:90px;"></div><div style="position:absolute;left:0px;top:155px;width:1897px;height:3px;background:#7d7d7d;"></div><div style="position:absolute;left:1896px;top:90px;width:5px;height:295px;background:#7d7d7d;"></div><div style="position:absolute;left:2px;top:158px;width:1895px;height:4px;background:#fbfbfb;"></div><div style="position:absolute;left:5px;top:162px;width:1805px;height:216px;background:#ebebeb;border:2px solid #6f6f6f;border-right-width:2px;"></div><div style="position:absolute;left:7px;top:163px;width:1801px;height:14px;background:linear-gradient(90deg,#e3ebf6,#ebf0f8);border-radius:5px 5px 0 0;border-bottom:1px solid #9c9c9c;"></div><div style="position:absolute;left:6px;top:176px;width:1803px;height:201px;border:1px solid #e8e800;border-top:none;"></div><div style="position:absolute;left:14px;top:165px;white-space:nowrap;font-weight:bold;font-size:11px;color:#404040;letter-spacing:0.05px;">( Average dE: 2.95 [1.93,2.09,0.39] max: 4.18 [CIE2000] )</div><div style="position:absolute;left:6px;top:176px;width:1803px;height:201px;border:1px solid #f0f000;border-top:none;"></div><div style="position:absolute;left:8px;top:176px;width:1781px;height:198px;background:#f0f0f0;border-top:2px solid #6a6a6a;border-left:2px solid #6a6a6a;border-bottom:1px solid #fff;"></div><div style="position:absolute;left:10px;top:178px;width:53px;height:22px;background:#f0f0f0;border-top:1px solid #fff;"></div><div style="position:absolute;left:10px;top:183px;white-space:nowrap;font-weight:bold;font-size:12px;letter-spacing:-0.2px;"><div style="width:53px;text-align:center">% Sat</div></div><div style="position:absolute;left:64px;top:178px;width:341px;height:22px;background:#f0f0f0;border-top:1px solid #fff;border-left:1px solid #fff;"></div><div style="position:absolute;left:64px;top:183px;white-space:nowrap;font-weight:bold;font-size:12px;"><div style="width:341px;text-align:center">0</div></div><div style="position:absolute;left:405px;top:178px;width:1px;height:23px;background:#6a6a6a;"></div><div style="position:absolute;left:406px;top:178px;width:341px;height:22px;background:#f0c0f0;border-top:1px solid #fff;border-left:1px solid #fff;"></div><div style="position:absolute;left:406px;top:183px;white-space:nowrap;font-weight:bold;font-size:12px;"><div style="width:341px;text-align:center">25</div></div><div style="position:absolute;left:747px;top:178px;width:1px;height:23px;background:#6a6a6a;"></div><div style="position:absolute;left:748px;top:178px;width:340px;height:22px;background:#f090f0;border-top:1px solid #fff;border-left:1px solid #fff;"></div><div style="position:absolute;left:748px;top:183px;white-space:nowrap;font-weight:bold;font-size:12px;"><div style="width:340px;text-align:center">50</div></div><div style="position:absolute;left:1088px;top:178px;width:1px;height:23px;background:#6a6a6a;"></div><div style="position:absolute;left:1089px;top:178px;width:340px;height:22px;background:#f060f0;border-top:1px solid #fff;border-left:1px solid #fff;"></div><div style="position:absolute;left:1089px;top:183px;white-space:nowrap;font-weight:bold;font-size:12px;"><div style="width:340px;text-align:center">75</div></div><div style="position:absolute;left:1429px;top:178px;width:1px;height:23px;background:#6a6a6a;"></div><div style="position:absolute;left:1430px;top:178px;width:340px;height:22px;background:#f030f0;border-top:1px solid #fff;border-left:1px solid #fff;"></div><div style="position:absolute;left:1430px;top:183px;white-space:nowrap;font-weight:bold;font-size:12px;"><div style="width:340px;text-align:center">100</div></div><div style="position:absolute;left:1770px;top:178px;width:1px;height:23px;background:#6a6a6a;"></div><div style="position:absolute;left:63px;top:178px;width:1px;height:173px;background:#6a6a6a;"></div><div style="position:absolute;left:10px;top:200px;width:1761px;height:1px;background:#6a6a6a;"></div><div style="position:absolute;left:10px;top:201px;width:53px;height:24px;background:#f0f0f0;"></div><div style="position:absolute;left:10px;top:225px;width:53px;height:1px;background:#6a6a6a;"></div><div style="position:absolute;left:10px;top:206px;white-space:nowrap;font-weight:bold;font-size:12px;letter-spacing:-0.3px;"><div style="width:53px;text-align:center">x</div></div><div style="position:absolute;left:64px;top:201px;width:341px;height:24px;background:#fff;"></div><div style="position:absolute;left:64px;top:225px;width:342px;height:1px;background:#c4c4c4;"></div><div style="position:absolute;left:64px;top:207px;white-space:nowrap;font-size:12.5px;letter-spacing:-0.7px;font-weight:normal;line-height:14px;"><div style="width:340px;text-align:right">0.3125</div></div><div style="position:absolute;left:406px;top:201px;width:341px;height:24px;background:#fff;"></div><div style="position:absolute;left:406px;top:225px;width:342px;height:1px;background:#c4c4c4;"></div><div style="position:absolute;left:406px;top:207px;white-space:nowrap;font-size:12.5px;letter-spacing:-0.7px;font-weight:normal;line-height:14px;"><div style="width:340px;text-align:right">0.3167</div></div><div style="position:absolute;left:748px;top:201px;width:340px;height:24px;background:#fff;"></div><div style="position:absolute;left:748px;top:225px;width:341px;height:1px;background:#c4c4c4;"></div><div style="position:absolute;left:748px;top:207px;white-space:nowrap;font-size:12.5px;letter-spacing:-0.7px;font-weight:normal;line-height:14px;"><div style="width:339px;text-align:right">0.3152</div></div><div style="position:absolute;left:1089px;top:201px;width:340px;height:24px;background:#fff;"></div><div style="position:absolute;left:1089px;top:225px;width:341px;height:1px;background:#c4c4c4;"></div><div style="position:absolute;left:1089px;top:207px;white-space:nowrap;font-size:12.5px;letter-spacing:-0.7px;font-weight:normal;line-height:14px;"><div style="width:339px;text-align:right">0.3123</div></div><div style="position:absolute;left:1430px;top:201px;width:340px;height:24px;background:#fff;"></div><div style="position:absolute;left:1430px;top:225px;width:341px;height:1px;background:#c4c4c4;"></div><div style="position:absolute;left:1430px;top:207px;white-space:nowrap;font-size:12.5px;letter-spacing:-0.7px;font-weight:normal;line-height:14px;"><div style="width:339px;text-align:right">0.3150</div></div><div style="position:absolute;left:405px;top:201px;width:1px;height:25px;background:#c4c4c4;"></div><div style="position:absolute;left:747px;top:201px;width:1px;height:25px;background:#c4c4c4;"></div><div style="position:absolute;left:1088px;top:201px;width:1px;height:25px;background:#c4c4c4;"></div><div style="position:absolute;left:1429px;top:201px;width:1px;height:25px;background:#c4c4c4;"></div><div style="position:absolute;left:1770px;top:201px;width:1px;height:25px;background:#c4c4c4;"></div><div style="position:absolute;left:10px;top:226px;width:53px;height:24px;background:#f0f0f0;"></div><div style="position:absolute;left:10px;top:250px;width:53px;height:1px;background:#6a6a6a;"></div><div style="position:absolute;left:10px;top:231px;white-space:nowrap;font-weight:bold;font-size:12px;letter-spacing:-0.3px;"><div style="width:53px;text-align:center">y</div></div><div style="position:absolute;left:64px;top:226px;width:341px;height:24px;background:#fff;"></div><div style="position:absolute;left:64px;top:250px;width:342px;height:1px;background:#c4c4c4;"></div><div style="position:absolute;left:64px;top:232px;white-space:nowrap;font-size:12.5px;letter-spacing:-0.7px;font-weight:normal;line-height:14px;"><div style="width:340px;text-align:right">0.3246</div></div><div style="position:absolute;left:406px;top:226px;width:341px;height:24px;background:#fff;"></div><div style="position:absolute;left:406px;top:250px;width:342px;height:1px;background:#c4c4c4;"></div><div style="position:absolute;left:406px;top:232px;white-space:nowrap;font-size:12.5px;letter-spacing:-0.7px;font-weight:normal;line-height:14px;"><div style="width:340px;text-align:right">0.2758</div></div><div style="position:absolute;left:748px;top:226px;width:340px;height:24px;background:#fff;"></div><div style="position:absolute;left:748px;top:250px;width:341px;height:1px;background:#c4c4c4;"></div><div style="position:absolute;left:748px;top:232px;white-space:nowrap;font-size:12.5px;letter-spacing:-0.7px;font-weight:normal;line-height:14px;"><div style="width:339px;text-align:right">0.2236</div></div><div style="position:absolute;left:1089px;top:226px;width:340px;height:24px;background:#fff;"></div><div style="position:absolute;left:1089px;top:250px;width:341px;height:1px;background:#c4c4c4;"></div><div style="position:absolute;left:1089px;top:232px;white-space:nowrap;font-size:12.5px;letter-spacing:-0.7px;font-weight:normal;line-height:14px;"><div style="width:339px;text-align:right">0.1810</div></div><div style="position:absolute;left:1430px;top:226px;width:340px;height:24px;background:#fff;"></div><div style="position:absolute;left:1430px;top:250px;width:341px;height:1px;background:#c4c4c4;"></div><div style="position:absolute;left:1430px;top:232px;white-space:nowrap;font-size:12.5px;letter-spacing:-0.7px;font-weight:normal;line-height:14px;"><div style="width:339px;text-align:right">0.1511</div></div><div style="position:absolute;left:405px;top:226px;width:1px;height:25px;background:#c4c4c4;"></div><div style="position:absolute;left:747px;top:226px;width:1px;height:25px;background:#c4c4c4;"></div><div style="position:absolute;left:1088px;top:226px;width:1px;height:25px;background:#c4c4c4;"></div><div style="position:absolute;left:1429px;top:226px;width:1px;height:25px;background:#c4c4c4;"></div><div style="position:absolute;left:1770px;top:226px;width:1px;height:25px;background:#c4c4c4;"></div><div style="position:absolute;left:10px;top:251px;width:53px;height:24px;background:#f0f0f0;"></div><div style="position:absolute;left:10px;top:275px;width:53px;height:1px;background:#6a6a6a;"></div><div style="position:absolute;left:10px;top:256px;white-space:nowrap;font-weight:bold;font-size:12px;letter-spacing:-0.3px;"><div style="width:53px;text-align:center">Y</div></div><div style="position:absolute;left:64px;top:251px;width:341px;height:24px;background:#fff;"></div><div style="position:absolute;left:64px;top:275px;width:342px;height:1px;background:#c4c4c4;"></div><div style="position:absolute;left:64px;top:257px;white-space:nowrap;font-size:12.5px;letter-spacing:-0.7px;font-weight:normal;line-height:14px;"><div style="width:340px;text-align:right">57.256</div></div><div style="position:absolute;left:406px;top:251px;width:341px;height:24px;background:#fff;"></div><div style="position:absolute;left:406px;top:275px;width:342px;height:1px;background:#c4c4c4;"></div><div style="position:absolute;left:406px;top:257px;white-space:nowrap;font-size:12.5px;letter-spacing:-0.7px;font-weight:normal;line-height:14px;"><div style="width:340px;text-align:right">57.472</div></div><div style="position:absolute;left:748px;top:251px;width:340px;height:24px;background:#fff;"></div><div style="position:absolute;left:748px;top:275px;width:341px;height:1px;background:#c4c4c4;"></div><div style="position:absolute;left:748px;top:257px;white-space:nowrap;font-size:12.5px;letter-spacing:-0.7px;font-weight:normal;line-height:14px;"><div style="width:339px;text-align:right">60.739</div></div><div style="position:absolute;left:1089px;top:251px;width:340px;height:24px;background:#fff;"></div><div style="position:absolute;left:1089px;top:275px;width:341px;height:1px;background:#c4c4c4;"></div><div style="position:absolute;left:1089px;top:257px;white-space:nowrap;font-size:12.5px;letter-spacing:-0.7px;font-weight:normal;line-height:14px;"><div style="width:339px;text-align:right">63.686</div></div><div style="position:absolute;left:1430px;top:251px;width:340px;height:24px;background:#fff;"></div><div style="position:absolute;left:1430px;top:275px;width:341px;height:1px;background:#c4c4c4;"></div><div style="position:absolute;left:1430px;top:257px;white-space:nowrap;font-size:12.5px;letter-spacing:-0.7px;font-weight:normal;line-height:14px;"><div style="width:339px;text-align:right">59.356</div></div><div style="position:absolute;left:405px;top:251px;width:1px;height:25px;background:#c4c4c4;"></div><div style="position:absolute;left:747px;top:251px;width:1px;height:25px;background:#c4c4c4;"></div><div style="position:absolute;left:1088px;top:251px;width:1px;height:25px;background:#c4c4c4;"></div><div style="position:absolute;left:1429px;top:251px;width:1px;height:25px;background:#c4c4c4;"></div><div style="position:absolute;left:1770px;top:251px;width:1px;height:25px;background:#c4c4c4;"></div><div style="position:absolute;left:10px;top:276px;width:53px;height:24px;background:#f0f0f0;"></div><div style="position:absolute;left:10px;top:300px;width:53px;height:1px;background:#6a6a6a;"></div><div style="position:absolute;left:10px;top:281px;white-space:nowrap;font-weight:bold;font-size:12px;letter-spacing:-0.3px;"><div style="width:53px;text-align:center">Delta E</div></div><div style="position:absolute;left:64px;top:276px;width:341px;height:24px;background:#ffffb0;"></div><div style="position:absolute;left:64px;top:300px;width:342px;height:1px;background:#c4c4c4;"></div><div style="position:absolute;left:64px;top:282px;white-space:nowrap;font-size:12.5px;letter-spacing:-0.7px;font-weight:bold;line-height:14px;"><div style="width:340px;text-align:right">2.9</div></div><div style="position:absolute;left:406px;top:276px;width:341px;height:24px;background:#ffffb0;"></div><div style="position:absolute;left:406px;top:300px;width:342px;height:1px;background:#c4c4c4;"></div><div style="position:absolute;left:406px;top:282px;white-space:nowrap;font-size:12.5px;letter-spacing:-0.7px;font-weight:bold;line-height:14px;"><div style="width:340px;text-align:right">2.8</div></div><div style="position:absolute;left:748px;top:276px;width:340px;height:24px;background:#ffabab;"></div><div style="position:absolute;left:748px;top:300px;width:341px;height:1px;background:#c4c4c4;"></div><div style="position:absolute;left:748px;top:282px;white-space:nowrap;font-size:12.5px;letter-spacing:-0.7px;font-weight:bold;line-height:14px;"><div style="width:339px;text-align:right">4.1</div></div><div style="position:absolute;left:1089px;top:276px;width:340px;height:24px;background:#ffabab;"></div><div style="position:absolute;left:1089px;top:300px;width:341px;height:1px;background:#c4c4c4;"></div><div style="position:absolute;left:1089px;top:282px;white-space:nowrap;font-size:12.5px;letter-spacing:-0.7px;font-weight:bold;line-height:14px;"><div style="width:339px;text-align:right">4.2</div></div><div style="position:absolute;left:1430px;top:276px;width:340px;height:24px;background:#b0ffb0;"></div><div style="position:absolute;left:1430px;top:300px;width:341px;height:1px;background:#c4c4c4;"></div><div style="position:absolute;left:1430px;top:282px;white-space:nowrap;font-size:12.5px;letter-spacing:-0.7px;font-weight:bold;line-height:14px;"><div style="width:339px;text-align:right">0.7</div></div><div style="position:absolute;left:405px;top:276px;width:1px;height:25px;background:#c4c4c4;"></div><div style="position:absolute;left:747px;top:276px;width:1px;height:25px;background:#c4c4c4;"></div><div style="position:absolute;left:1088px;top:276px;width:1px;height:25px;background:#c4c4c4;"></div><div style="position:absolute;left:1429px;top:276px;width:1px;height:25px;background:#c4c4c4;"></div><div style="position:absolute;left:1770px;top:276px;width:1px;height:25px;background:#c4c4c4;"></div><div style="position:absolute;left:10px;top:301px;width:53px;height:24px;background:#f0f0f0;"></div><div style="position:absolute;left:10px;top:325px;width:53px;height:1px;background:#6a6a6a;"></div><div style="position:absolute;left:10px;top:306px;white-space:nowrap;font-weight:bold;font-size:12px;letter-spacing:-0.3px;"><div style="width:53px;text-align:center">delta xy</div></div><div style="position:absolute;left:64px;top:301px;width:341px;height:24px;background:#f0f0f0;"></div><div style="position:absolute;left:64px;top:325px;width:342px;height:1px;background:#c4c4c4;"></div><div style="position:absolute;left:64px;top:307px;white-space:nowrap;font-size:12.5px;letter-spacing:-0.7px;font-weight:normal;line-height:14px;"><div style="width:340px;text-align:right">0.0044</div></div><div style="position:absolute;left:406px;top:301px;width:341px;height:24px;background:#f0f0f0;"></div><div style="position:absolute;left:406px;top:325px;width:342px;height:1px;background:#c4c4c4;"></div><div style="position:absolute;left:406px;top:307px;white-space:nowrap;font-size:12.5px;letter-spacing:-0.7px;font-weight:normal;line-height:14px;"><div style="width:340px;text-align:right">0.0072</div></div><div style="position:absolute;left:748px;top:301px;width:340px;height:24px;background:#f0f0f0;"></div><div style="position:absolute;left:748px;top:325px;width:341px;height:1px;background:#c4c4c4;"></div><div style="position:absolute;left:748px;top:307px;white-space:nowrap;font-size:12.5px;letter-spacing:-0.7px;font-weight:normal;line-height:14px;"><div style="width:339px;text-align:right">0.0135</div></div><div style="position:absolute;left:1089px;top:301px;width:340px;height:24px;background:#f0f0f0;"></div><div style="position:absolute;left:1089px;top:325px;width:341px;height:1px;background:#c4c4c4;"></div><div style="position:absolute;left:1089px;top:307px;white-space:nowrap;font-size:12.5px;letter-spacing:-0.7px;font-weight:normal;line-height:14px;"><div style="width:339px;text-align:right">0.0135</div></div><div style="position:absolute;left:1430px;top:301px;width:340px;height:24px;background:#f0f0f0;"></div><div style="position:absolute;left:1430px;top:325px;width:341px;height:1px;background:#c4c4c4;"></div><div style="position:absolute;left:1430px;top:307px;white-space:nowrap;font-size:12.5px;letter-spacing:-0.7px;font-weight:normal;line-height:14px;"><div style="width:339px;text-align:right">0.0067</div></div><div style="position:absolute;left:405px;top:301px;width:1px;height:25px;background:#c4c4c4;"></div><div style="position:absolute;left:747px;top:301px;width:1px;height:25px;background:#c4c4c4;"></div><div style="position:absolute;left:1088px;top:301px;width:1px;height:25px;background:#c4c4c4;"></div><div style="position:absolute;left:1429px;top:301px;width:1px;height:25px;background:#c4c4c4;"></div><div style="position:absolute;left:1770px;top:301px;width:1px;height:25px;background:#c4c4c4;"></div><div style="position:absolute;left:10px;top:326px;width:53px;height:24px;background:#f0f0f0;"></div><div style="position:absolute;left:10px;top:350px;width:53px;height:1px;background:#6a6a6a;"></div><div style="position:absolute;left:10px;top:331px;white-space:nowrap;font-weight:bold;font-size:12px;letter-spacing:-0.3px;"><div style="width:53px;text-align:center">delta L</div></div><div style="position:absolute;left:64px;top:326px;width:341px;height:24px;background:#e0e0e0;"></div><div style="position:absolute;left:64px;top:350px;width:342px;height:1px;background:#c4c4c4;"></div><div style="position:absolute;left:64px;top:332px;white-space:nowrap;font-size:12.5px;letter-spacing:-0.7px;font-weight:normal;line-height:14px;"><div style="width:340px;text-align:right">+8.7 %</div></div><div style="position:absolute;left:406px;top:326px;width:341px;height:24px;background:#e0e0e0;"></div><div style="position:absolute;left:406px;top:350px;width:342px;height:1px;background:#c4c4c4;"></div><div style="position:absolute;left:406px;top:332px;white-space:nowrap;font-size:12.5px;letter-spacing:-0.7px;font-weight:normal;line-height:14px;"><div style="width:340px;text-align:right">+7.3 %</div></div><div style="position:absolute;left:748px;top:326px;width:340px;height:24px;background:#e0e0e0;"></div><div style="position:absolute;left:748px;top:350px;width:341px;height:1px;background:#c4c4c4;"></div><div style="position:absolute;left:748px;top:332px;white-space:nowrap;font-size:12.5px;letter-spacing:-0.7px;font-weight:normal;line-height:14px;"><div style="width:339px;text-align:right">+12.9 %</div></div><div style="position:absolute;left:1089px;top:326px;width:340px;height:24px;background:#e0e0e0;"></div><div style="position:absolute;left:1089px;top:350px;width:341px;height:1px;background:#c4c4c4;"></div><div style="position:absolute;left:1089px;top:332px;white-space:nowrap;font-size:12.5px;letter-spacing:-0.7px;font-weight:normal;line-height:14px;"><div style="width:339px;text-align:right">+15.8 %</div></div><div style="position:absolute;left:1430px;top:326px;width:340px;height:24px;background:#e0e0e0;"></div><div style="position:absolute;left:1430px;top:350px;width:341px;height:1px;background:#c4c4c4;"></div><div style="position:absolute;left:1430px;top:332px;white-space:nowrap;font-size:12.5px;letter-spacing:-0.7px;font-weight:normal;line-height:14px;"><div style="width:339px;text-align:right">+1.0 %</div></div><div style="position:absolute;left:405px;top:326px;width:1px;height:25px;background:#c4c4c4;"></div><div style="position:absolute;left:747px;top:326px;width:1px;height:25px;background:#c4c4c4;"></div><div style="position:absolute;left:1088px;top:326px;width:1px;height:25px;background:#c4c4c4;"></div><div style="position:absolute;left:1429px;top:326px;width:1px;height:25px;background:#c4c4c4;"></div><div style="position:absolute;left:1770px;top:326px;width:1px;height:25px;background:#c4c4c4;"></div><div style="position:absolute;left:10px;top:351px;width:1761px;height:5px;background:#f0f0f0;"></div><div style="position:absolute;left:63px;top:351px;width:1px;height:5px;background:#6a6a6a;"></div><div style="position:absolute;left:405px;top:351px;width:1px;height:5px;background:#c4c4c4;"></div><div style="position:absolute;left:747px;top:351px;width:1px;height:5px;background:#c4c4c4;"></div><div style="position:absolute;left:1088px;top:351px;width:1px;height:5px;background:#c4c4c4;"></div><div style="position:absolute;left:1429px;top:351px;width:1px;height:5px;background:#c4c4c4;"></div><div style="position:absolute;left:1770px;top:351px;width:1px;height:5px;background:#c4c4c4;"></div><div style="position:absolute;left:10px;top:356px;width:1778px;height:17px;background:#f0f0f0;border-top:1px solid #fff;"></div><svg style="position:absolute;left:14px;top:359px" width="7" height="11" viewBox="0 0 7 11"><path d="M7 0 V11 L0 5.5 Z" fill="#a8a8a8"/></svg><svg style="position:absolute;left:1759px;top:359px" width="7" height="11" viewBox="0 0 7 11"><path d="M0 0 V11 L7 5.5 Z" fill="#a8a8a8"/></svg><div style="position:absolute;left:1771px;top:178px;width:17px;height:178px;background:#f0f0f0;border-left:1px solid #fff;"></div><div style="position:absolute;left:1778px;top:195px;width:3px;height:140px;background:#888;border-radius:1px;"></div><div style="position:absolute;left:1788px;top:178px;width:20px;height:196px;background:#e8e8e8;border-left:1px solid #fff;"></div><div style="position:absolute;left:1789px;top:177px;width:20px;height:2px;background:#f0f000;"></div><div style="position:absolute;left:1810px;top:158px;width:86px;height:227px;background:#878787;"></div><div style="position:absolute;left:1811px;top:158px;width:2px;height:227px;background:#fff;"></div><div style="position:absolute;left:1815px;top:162px;width:80px;height:98px;background:#ebebeb;border:2px solid #6f6f6f;border-right-width:2px;"></div><div style="position:absolute;left:1817px;top:163px;width:76px;height:17px;background:linear-gradient(90deg,#e3ebf6,#ebf0f8);border-radius:5px 5px 0 0;border-bottom:1px solid #9c9c9c;"></div><div style="position:absolute;left:1822px;top:165px;white-space:nowrap;font-weight:bold;font-size:13px;color:#3a3a3a;letter-spacing:0.3px;">Display</div><div style="position:absolute;left:1821px;top:180px;width:61px;height:15px;background:#e8e8e8;"></div><svg style="position:absolute;left:1823px;top:182px" width="12" height="12" viewBox="0 0 12 12"><circle cx="6" cy="6" r="5" fill="#fff" stroke="#c0c0c0"/></svg><div style="position:absolute;left:1840px;top:179px;white-space:nowrap;font-size:13.5px;letter-spacing:0.45px;margin-top:1px;color:#a8a8a8;">Sensor</div><div style="position:absolute;left:1821px;top:196px;width:61px;height:15px;background:#e8e8e8;"></div><svg style="position:absolute;left:1823px;top:198px" width="12" height="12" viewBox="0 0 12 12"><circle cx="6" cy="6" r="5" fill="#fff" stroke="#707070"/></svg><div style="position:absolute;left:1840px;top:195px;white-space:nowrap;font-size:13.5px;letter-spacing:0.45px;margin-top:1px;color:#000;">RGB</div><div style="position:absolute;left:1821px;top:212px;width:61px;height:15px;background:#e8e8e8;"></div><svg style="position:absolute;left:1823px;top:214px" width="12" height="12" viewBox="0 0 12 12"><circle cx="6" cy="6" r="5" fill="#fff" stroke="#707070"/></svg><div style="position:absolute;left:1840px;top:211px;white-space:nowrap;font-size:13.5px;letter-spacing:0.45px;margin-top:1px;color:#000;">XYZ</div><div style="position:absolute;left:1821px;top:228px;width:61px;height:15px;background:#e8e8e8;"></div><svg style="position:absolute;left:1823px;top:230px" width="12" height="12" viewBox="0 0 12 12"><circle cx="6" cy="6" r="5" fill="#fff" stroke="#707070"/></svg><div style="position:absolute;left:1840px;top:227px;white-space:nowrap;font-size:13.5px;letter-spacing:0.45px;margin-top:1px;color:#000;">xyz</div><div style="position:absolute;left:1821px;top:244px;width:61px;height:15px;background:#e8e8e8;"></div><svg style="position:absolute;left:1823px;top:246px" width="12" height="12" viewBox="0 0 12 12"><circle cx="6" cy="6" r="5" fill="#fff" stroke="#707070"/><circle cx="6" cy="6" r="2" fill="#000"/></svg><div style="position:absolute;left:1840px;top:243px;white-space:nowrap;font-size:13.5px;letter-spacing:0.45px;margin-top:1px;color:#000;">xyY</div><div style="position:absolute;left:1813px;top:264px;width:82px;height:29px;background:#ececec;border:1px solid #fff;border-right-color:#9a9a9a;border-bottom-color:#9a9a9a;"></div><svg style="position:absolute;left:1817px;top:266px" width="34" height="28" viewBox="0 0 34 28"><rect x="1" y="1" width="32" height="26" fill="#b4b4b4"/><path d="M1 1 V27 M33 1 V27" stroke="#111" stroke-width="1.5"/><path d="M2.5 2 V26 M31.5 2 V26" stroke="#111" stroke-width="1" stroke-dasharray="1 1"/><path d="M5 6 Q8 6 8 9 Q8 12 5 12 M5 14 Q8 14 8 17 Q8 20 5 20 M29 8 Q26 8 26 11 Q26 14 29 14 M29 17 Q26 17 26 20 Q26 23 29 23" fill="none" stroke="#888" stroke-width="1.2"/><path d="M6 1 L21 1 L23 8 L32 19 L28 27 L14 27 L12 17 Z" fill="#a010c8" stroke="#50087a" stroke-width="0.8"/><path d="M10 8 L20 7 M12 15 L23 13 M16 22 L27 20" stroke="#6a0a98" stroke-width="1"/><path d="M20 20 L27 24" stroke="#e080ff" stroke-width="1.2"/></svg><div style="position:absolute;left:1863px;top:271px;white-space:nowrap;font-size:14px;">Go</div><div style="position:absolute;left:1813px;top:294px;width:82px;height:29px;background:#ececec;border:1px solid #fff;border-right-color:#9a9a9a;border-bottom-color:#9a9a9a;"></div><svg style="position:absolute;left:1818px;top:295px" width="32" height="29" viewBox="0 0 32 29"><defs><linearGradient id="bn" x1="0" y1="0" x2="1" y2="1"><stop offset="0" stop-color="#d8f0ff"/><stop offset="1" stop-color="#5a9ed8"/></linearGradient></defs><path d="M2 4 Q16 0 29 1 L26 25 Q16 29 6 25 Z" fill="url(#bn)" stroke="#6a9ac8" stroke-width="0.8"/><ellipse cx="16" cy="22" rx="9" ry="3.5" fill="#b0d8f4" opacity="0.8"/><path d="M4 4 Q16 2 28 3" fill="none" stroke="#4a88c8" stroke-width="1.5"/><path d="M14 17 Q13 10 19 9 L19 7 L23 11 L19 15 L19 12.5 Q16 13 16.5 17 Z" fill="#10a020"/><path d="M22 13 Q23 20 17 21 L17 23 L13 19 L17 15 L17 17.5 Q20 17 19.5 13 Z" fill="#10a020"/></svg><div style="position:absolute;left:1851px;top:301px;white-space:nowrap;font-size:14px;">Delete</div><div style="position:absolute;left:1813px;top:324px;width:82px;height:29px;background:#ececec;border:1px solid #fff;border-right-color:#9a9a9a;border-bottom-color:#9a9a9a;"></div><svg style="position:absolute;left:1817px;top:328px" width="34" height="24" viewBox="0 0 34 24"><path d="M1 12 L3 10 L5 9 L7 4 L9 5 L10 8 L11 7 L13 9 L15 8 L17 3 L20 1 L22 4 L24 5 L26 8 L28 9 L30 8 L33 10 V23 H1 Z" fill="#f0f000"/><path d="M1 13 L3 11 L3 23 H1 Z" fill="#000080"/><rect x="3" y="11" width="2" height="12" fill="#ff00ff"/><path d="M5 10 L7 5 L9 6 L9 23 H5 Z" fill="#0000ff"/><path d="M9 8 L11 8 L13 10 V23 H9 Z" fill="#00ffff"/><path d="M13 10 L15 9 L16 9 V23 H13 Z" fill="#00ff00"/><path d="M16 9 L17 4 L20 2 L22 5 V23 H16 Z" fill="#ffff00"/><path d="M22 5 L24 6 L26 9 V23 H22 Z" fill="#800000"/><path d="M26 10 L28 10 L30 9 L33 11 V23 H26 Z" fill="#ff0000"/></svg><div style="position:absolute;left:1858px;top:331px;white-space:nowrap;font-size:14px;">Refs</div><div style="position:absolute;left:1817px;top:357px;width:57px;height:18px;background:#f0f0f0;"></div><div style="position:absolute;left:1819px;top:360px;width:13px;height:13px;background:#fff;border:1px solid #707070;border-right-color:#e0e0e0;border-bottom-color:#e0e0e0;"></div><div style="position:absolute;left:1836px;top:358px;white-space:nowrap;font-size:13.5px;letter-spacing:0.45px;margin-top:1px;">Edit</div><div style="position:absolute;left:1901px;top:90px;width:19px;height:952px;background:#f0f0f0;"></div><div style="position:absolute;left:1901px;top:90px;width:7px;height:932px;background:#fbfbfb;"></div><div style="position:absolute;left:1909px;top:108px;width:2px;height:870px;background:#7a7a7a;"></div><div style="position:absolute;left:1918px;top:90px;width:2px;height:952px;background:#e4e4e4;"></div><div style="position:absolute;left:2px;top:378px;width:1895px;height:2px;background:#fbfbfb;"></div><div style="position:absolute;left:0px;top:380px;width:1897px;height:4px;background:#7d7d7d;"></div><div style="position:absolute;left:2px;top:384px;width:1895px;height:3px;background:#fbfbfb;"></div><div style="position:absolute;left:5px;top:387px;width:378px;height:629px;background:#ebebeb;border:2px solid #6f6f6f;border-right-width:2px;"></div><div style="position:absolute;left:7px;top:388px;width:374px;height:18px;background:linear-gradient(90deg,#e3ebf6,#ebf0f8);border-radius:5px 5px 0 0;border-bottom:1px solid #9c9c9c;"></div><div style="position:absolute;left:12px;top:390px;white-space:nowrap;font-weight:bold;font-size:13px;color:#3a3a3a;letter-spacing:0.3px;">Selected color</div><div style="position:absolute;left:385px;top:384px;width:3px;height:632px;background:#7d7d7d;"></div><div style="position:absolute;left:388px;top:384px;width:3px;height:632px;background:#fbfbfb;"></div><div style="position:absolute;left:13px;top:408px;width:115px;height:16px;background:#efefef;"></div><div style="position:absolute;left:18px;top:408px;white-space:nowrap;font-size:13.5px;letter-spacing:0.45px;margin-top:1px;letter-spacing:0;">RGB Levels</div><div style="position:absolute;left:229px;top:406px;width:128px;height:17px;background:#efefef;"></div><div style="position:absolute;left:241px;top:406px;white-space:nowrap;font-size:13.5px;letter-spacing:0.45px;margin-top:1px;">Current Measure</div><div style="position:absolute;left:14px;top:433px;width:200px;height:86px;background:#efefef;"></div><div style="position:absolute;left:14px;top:477px;width:200px;height:1px;background:repeating-linear-gradient(90deg,#909090 0 3px,transparent 3px 5px);"></div><svg style="position:absolute;left:14px;top:505px" width="200" height="14" viewBox="0 0 200 14"><path d="M0 10 Q25 -1 50 10 Z" fill="#a00000" stroke="#000" stroke-width="0.8"/><path d="M50 10 Q75 -1 100 10 Z" fill="#009000" stroke="#000" stroke-width="0.8"/><path d="M100 10 Q125 -1 150 10 Z" fill="#0000b0" stroke="#000" stroke-width="0.8"/><path d="M150 10 Q175 -1 200 10 Z" fill="#c08000" stroke="#000" stroke-width="0.8"/><rect x="0" y="9" width="200" height="5" fill="#000"/></svg><div style="position:absolute;left:9px;top:495px;white-space:nowrap;font-family:'Liberation Serif', serif;font-weight:bold;font-size:11.5px;color:#202020;"><div style="width:60px;text-align:center">0.0%</div></div><div style="position:absolute;left:60px;top:495px;white-space:nowrap;font-family:'Liberation Serif', serif;font-weight:bold;font-size:11.5px;color:#202020;"><div style="width:60px;text-align:center">0.0%</div></div><div style="position:absolute;left:110px;top:495px;white-space:nowrap;font-family:'Liberation Serif', serif;font-weight:bold;font-size:11.5px;color:#202020;"><div style="width:60px;text-align:center">0.0%</div></div><div style="position:absolute;left:162px;top:495px;white-space:nowrap;font-family:'Liberation Serif', serif;font-weight:bold;font-size:11.5px;color:#202020;"><div style="width:60px;text-align:center">dE 0.0</div></div><div style="position:absolute;left:16px;top:533px;width:192px;height:74px;background:#efefef;"></div><div style="position:absolute;left:18px;top:532px;white-space:nowrap;font-weight:bold;font-size:14px;"><div style="width:90px;text-align:center;line-height:16px">No<br>Measure</div></div><div style="position:absolute;left:114px;top:532px;white-space:nowrap;font-weight:bold;font-size:14px;"><div style="width:90px;text-align:center;line-height:16px">No<br>Measure</div></div><div style="position:absolute;left:13px;top:621px;width:28px;height:16px;background:#efefef;"></div><div style="position:absolute;left:18px;top:621px;white-space:nowrap;font-size:13.5px;letter-spacing:0.45px;margin-top:1px;">Target</div><div style="position:absolute;left:50px;top:638px;width:116px;height:89px;border:1px solid #000;background:conic-gradient(from 0deg at 50% 50%,#50ff00 0deg,#ffc800 50deg,#ff0000 90deg,#ff0090 130deg,#8000c0 180deg,#0000ff 230deg,#008090 270deg,#00ff80 310deg,#50ff00 360deg);"></div><div style="position:absolute;left:67px;top:651px;width:82px;height:63px;background:#f4f4f4;border-radius:8px;"></div><svg style="position:absolute;left:50px;top:638px" width="116" height="89" viewBox="0 0 116 89"><path d="M52.5 41.7 A6.0 6.0 0 0 1 55.7 38.5" fill="none" stroke="#00e070" stroke-width="1.1"/><path d="M47.7 39.6 A11.2 11.2 0 0 1 53.6 33.7" fill="none" stroke="#00e070" stroke-width="1.1"/><path d="M42.9 37.6 A16.4 16.4 0 0 1 51.6 28.9" fill="none" stroke="#00e070" stroke-width="1.1"/><path d="M38.1 35.6 A21.6 21.6 0 0 1 49.6 24.1" fill="none" stroke="#00e070" stroke-width="1.1"/><path d="M33.3 33.5 A26.8 26.8 0 0 1 47.5 19.3" fill="none" stroke="#00e070" stroke-width="1.1"/><path d="M28.5 31.5 A32.0 32.0 0 0 1 45.5 14.5" fill="none" stroke="#00e070" stroke-width="1.1"/><path d="M60.3 38.5 A6.0 6.0 0 0 1 63.5 41.7" fill="none" stroke="#f0a800" stroke-width="1.1"/><path d="M62.4 33.7 A11.2 11.2 0 0 1 68.3 39.6" fill="none" stroke="#f0a800" stroke-width="1.1"/><path d="M64.4 28.9 A16.4 16.4 0 0 1 73.1 37.6" fill="none" stroke="#f0a800" stroke-width="1.1"/><path d="M66.4 24.1 A21.6 21.6 0 0 1 77.9 35.6" fill="none" stroke="#f0a800" stroke-width="1.1"/><path d="M68.5 19.3 A26.8 26.8 0 0 1 82.7 33.5" fill="none" stroke="#f0a800" stroke-width="1.1"/><path d="M70.5 14.5 A32.0 32.0 0 0 1 87.5 31.5" fill="none" stroke="#f0a800" stroke-width="1.1"/><path d="M63.5 46.3 A6.0 6.0 0 0 1 60.3 49.5" fill="none" stroke="#ff1090" stroke-width="1.1"/><path d="M68.3 48.4 A11.2 11.2 0 0 1 62.4 54.3" fill="none" stroke="#ff1090" stroke-width="1.1"/><path d="M73.1 50.4 A16.4 16.4 0 0 1 64.4 59.1" fill="none" stroke="#ff1090" stroke-width="1.1"/><path d="M77.9 52.4 A21.6 21.6 0 0 1 66.4 63.9" fill="none" stroke="#ff1090" stroke-width="1.1"/><path d="M82.7 54.5 A26.8 26.8 0 0 1 68.5 68.7" fill="none" stroke="#ff1090" stroke-width="1.1"/><path d="M87.5 56.5 A32.0 32.0 0 0 1 70.5 73.5" fill="none" stroke="#ff1090" stroke-width="1.1"/><path d="M55.7 49.5 A6.0 6.0 0 0 1 52.5 46.3" fill="none" stroke="#1050ff" stroke-width="1.1"/><path d="M53.6 54.3 A11.2 11.2 0 0 1 47.7 48.4" fill="none" stroke="#1050ff" stroke-width="1.1"/><path d="M51.6 59.1 A16.4 16.4 0 0 1 42.9 50.4" fill="none" stroke="#1050ff" stroke-width="1.1"/><path d="M49.6 63.9 A21.6 21.6 0 0 1 38.1 52.4" fill="none" stroke="#1050ff" stroke-width="1.1"/><path d="M47.5 68.7 A26.8 26.8 0 0 1 33.3 54.5" fill="none" stroke="#1050ff" stroke-width="1.1"/><path d="M45.5 73.5 A32.0 32.0 0 0 1 28.5 56.5" fill="none" stroke="#1050ff" stroke-width="1.1"/><path d="M54 44 H62 M58 40 V48" stroke="#000" stroke-width="1"/></svg><div style="position:absolute;left:221px;top:431px;width:152px;height:577px;background:#f0f0f0;border-top:2px solid #6a6a6a;border-left:2px solid #6a6a6a;"></div><div style="position:absolute;left:223px;top:432px;width:56px;height:22px;background:#f0f0f0;"></div><div style="position:absolute;left:223px;top:454px;width:57px;height:1px;background:#6a6a6a;"></div><div style="position:absolute;left:281px;top:432px;width:73px;height:22px;background:#fff;"></div><div style="position:absolute;left:281px;top:454px;width:73px;height:1px;background:#c4c4c4;"></div><div style="position:absolute;left:223px;top:434px;white-space:nowrap;font-weight:bold;font-size:12px;letter-spacing:-0.2px;"><div style="width:57px;text-align:center;line-height:14px">Y cd/m<sup style='font-size:8px'>2</sup></div></div><div style="position:absolute;left:223px;top:455px;width:56px;height:22px;background:#f0f0f0;"></div><div style="position:absolute;left:223px;top:477px;width:57px;height:1px;background:#6a6a6a;"></div><div style="position:absolute;left:281px;top:455px;width:73px;height:22px;background:#fff;"></div><div style="position:absolute;left:281px;top:477px;width:73px;height:1px;background:#c4c4c4;"></div><div style="position:absolute;left:223px;top:460px;white-space:nowrap;font-weight:bold;font-size:12px;letter-spacing:-0.2px;"><div style="width:57px;text-align:center;line-height:14px">Y ftL</div></div><div style="position:absolute;left:223px;top:478px;width:56px;height:22px;background:#f0f0f0;"></div><div style="position:absolute;left:223px;top:500px;width:57px;height:1px;background:#6a6a6a;"></div><div style="position:absolute;left:281px;top:478px;width:73px;height:22px;background:#fff;"></div><div style="position:absolute;left:281px;top:500px;width:73px;height:1px;background:#c4c4c4;"></div><div style="position:absolute;left:223px;top:483px;white-space:nowrap;font-weight:bold;font-size:12px;letter-spacing:-0.2px;"><div style="width:57px;text-align:center;line-height:14px">T°</div></div><div style="position:absolute;left:223px;top:501px;width:56px;height:22px;background:#f0f0f0;"></div><div style="position:absolute;left:223px;top:523px;width:57px;height:1px;background:#6a6a6a;"></div><div style="position:absolute;left:281px;top:501px;width:73px;height:22px;background:#dedede;"></div><div style="position:absolute;left:281px;top:523px;width:73px;height:1px;background:#c4c4c4;"></div><div style="position:absolute;left:223px;top:506px;white-space:nowrap;font-weight:bold;font-size:12px;letter-spacing:-0.2px;"><div style="width:57px;text-align:center;line-height:14px">X</div></div><div style="position:absolute;left:223px;top:524px;width:56px;height:22px;background:#f0f0f0;"></div><div style="position:absolute;left:223px;top:546px;width:57px;height:1px;background:#6a6a6a;"></div><div style="position:absolute;left:281px;top:524px;width:73px;height:22px;background:#dedede;"></div><div style="position:absolute;left:281px;top:546px;width:73px;height:1px;background:#c4c4c4;"></div><div style="position:absolute;left:223px;top:529px;white-space:nowrap;font-weight:bold;font-size:12px;letter-spacing:-0.2px;"><div style="width:57px;text-align:center;line-height:14px">Y</div></div><div style="position:absolute;left:223px;top:547px;width:56px;height:22px;background:#f0f0f0;"></div><div style="position:absolute;left:223px;top:569px;width:57px;height:1px;background:#6a6a6a;"></div><div style="position:absolute;left:281px;top:547px;width:73px;height:22px;background:#dedede;"></div><div style="position:absolute;left:281px;top:569px;width:73px;height:1px;background:#c4c4c4;"></div><div style="position:absolute;left:223px;top:552px;white-space:nowrap;font-weight:bold;font-size:12px;letter-spacing:-0.2px;"><div style="width:57px;text-align:center;line-height:14px">Z</div></div><div style="position:absolute;left:223px;top:570px;width:56px;height:22px;background:#f0f0f0;"></div><div style="position:absolute;left:223px;top:592px;width:57px;height:1px;background:#6a6a6a;"></div><div style="position:absolute;left:281px;top:570px;width:73px;height:22px;background:#fff;"></div><div style="position:absolute;left:281px;top:592px;width:73px;height:1px;background:#c4c4c4;"></div><div style="position:absolute;left:223px;top:575px;white-space:nowrap;font-weight:bold;font-size:12px;letter-spacing:-0.2px;"><div style="width:57px;text-align:center;line-height:14px">R</div></div><div style="position:absolute;left:223px;top:593px;width:56px;height:22px;background:#f0f0f0;"></div><div style="position:absolute;left:223px;top:615px;width:57px;height:1px;background:#6a6a6a;"></div><div style="position:absolute;left:281px;top:593px;width:73px;height:22px;background:#fff;"></div><div style="position:absolute;left:281px;top:615px;width:73px;height:1px;background:#c4c4c4;"></div><div style="position:absolute;left:223px;top:598px;white-space:nowrap;font-weight:bold;font-size:12px;letter-spacing:-0.2px;"><div style="width:57px;text-align:center;line-height:14px">G</div></div><div style="position:absolute;left:223px;top:616px;width:56px;height:22px;background:#f0f0f0;"></div><div style="position:absolute;left:223px;top:638px;width:57px;height:1px;background:#6a6a6a;"></div><div style="position:absolute;left:281px;top:616px;width:73px;height:22px;background:#fff;"></div><div style="position:absolute;left:281px;top:638px;width:73px;height:1px;background:#c4c4c4;"></div><div style="position:absolute;left:223px;top:621px;white-space:nowrap;font-weight:bold;font-size:12px;letter-spacing:-0.2px;"><div style="width:57px;text-align:center;line-height:14px">B</div></div><div style="position:absolute;left:223px;top:639px;width:56px;height:22px;background:#f0f0f0;"></div><div style="position:absolute;left:223px;top:661px;width:57px;height:1px;background:#6a6a6a;"></div><div style="position:absolute;left:281px;top:639px;width:73px;height:22px;background:#dedede;"></div><div style="position:absolute;left:281px;top:661px;width:73px;height:1px;background:#c4c4c4;"></div><div style="position:absolute;left:223px;top:644px;white-space:nowrap;font-weight:bold;font-size:12px;letter-spacing:-0.2px;"><div style="width:57px;text-align:center;line-height:14px">x</div></div><div style="position:absolute;left:223px;top:662px;width:56px;height:22px;background:#f0f0f0;"></div><div style="position:absolute;left:223px;top:684px;width:57px;height:1px;background:#6a6a6a;"></div><div style="position:absolute;left:281px;top:662px;width:73px;height:22px;background:#dedede;"></div><div style="position:absolute;left:281px;top:684px;width:73px;height:1px;background:#c4c4c4;"></div><div style="position:absolute;left:223px;top:667px;white-space:nowrap;font-weight:bold;font-size:12px;letter-spacing:-0.2px;"><div style="width:57px;text-align:center;line-height:14px">y</div></div><div style="position:absolute;left:223px;top:685px;width:56px;height:22px;background:#f0f0f0;"></div><div style="position:absolute;left:223px;top:707px;width:57px;height:1px;background:#6a6a6a;"></div><div style="position:absolute;left:281px;top:685px;width:73px;height:22px;background:#dedede;"></div><div style="position:absolute;left:281px;top:707px;width:73px;height:1px;background:#c4c4c4;"></div><div style="position:absolute;left:223px;top:690px;white-space:nowrap;font-weight:bold;font-size:12px;letter-spacing:-0.2px;"><div style="width:57px;text-align:center;line-height:14px">Y</div></div><div style="position:absolute;left:223px;top:708px;width:56px;height:22px;background:#f0f0f0;"></div><div style="position:absolute;left:223px;top:730px;width:57px;height:1px;background:#6a6a6a;"></div><div style="position:absolute;left:281px;top:708px;width:73px;height:22px;background:#fff;"></div><div style="position:absolute;left:281px;top:730px;width:73px;height:1px;background:#c4c4c4;"></div><div style="position:absolute;left:223px;top:713px;white-space:nowrap;font-weight:bold;font-size:12px;letter-spacing:-0.2px;"><div style="width:57px;text-align:center;line-height:14px">x</div></div><div style="position:absolute;left:223px;top:731px;width:56px;height:22px;background:#f0f0f0;"></div><div style="position:absolute;left:223px;top:753px;width:57px;height:1px;background:#6a6a6a;"></div><div style="position:absolute;left:281px;top:731px;width:73px;height:22px;background:#fff;"></div><div style="position:absolute;left:281px;top:753px;width:73px;height:1px;background:#c4c4c4;"></div><div style="position:absolute;left:223px;top:736px;white-space:nowrap;font-weight:bold;font-size:12px;letter-spacing:-0.2px;"><div style="width:57px;text-align:center;line-height:14px">y</div></div><div style="position:absolute;left:223px;top:754px;width:56px;height:22px;background:#f0f0f0;"></div><div style="position:absolute;left:223px;top:776px;width:57px;height:1px;background:#6a6a6a;"></div><div style="position:absolute;left:281px;top:754px;width:73px;height:22px;background:#fff;"></div><div style="position:absolute;left:281px;top:776px;width:73px;height:1px;background:#c4c4c4;"></div><div style="position:absolute;left:223px;top:759px;white-space:nowrap;font-weight:bold;font-size:12px;letter-spacing:-0.2px;"><div style="width:57px;text-align:center;line-height:14px">z</div></div><div style="position:absolute;left:223px;top:777px;width:56px;height:22px;background:#f0f0f0;"></div><div style="position:absolute;left:223px;top:799px;width:57px;height:1px;background:#6a6a6a;"></div><div style="position:absolute;left:281px;top:777px;width:73px;height:22px;background:#dedede;"></div><div style="position:absolute;left:281px;top:799px;width:73px;height:1px;background:#c4c4c4;"></div><div style="position:absolute;left:223px;top:782px;white-space:nowrap;font-weight:bold;font-size:12px;letter-spacing:-0.2px;"><div style="width:57px;text-align:center;line-height:14px">L</div></div><div style="position:absolute;left:223px;top:800px;width:56px;height:22px;background:#f0f0f0;"></div><div style="position:absolute;left:223px;top:822px;width:57px;height:1px;background:#6a6a6a;"></div><div style="position:absolute;left:281px;top:800px;width:73px;height:22px;background:#dedede;"></div><div style="position:absolute;left:281px;top:822px;width:73px;height:1px;background:#c4c4c4;"></div><div style="position:absolute;left:223px;top:805px;white-space:nowrap;font-weight:bold;font-size:12px;letter-spacing:-0.2px;"><div style="width:57px;text-align:center;line-height:14px">a</div></div><div style="position:absolute;left:223px;top:823px;width:56px;height:22px;background:#f0f0f0;"></div><div style="position:absolute;left:223px;top:845px;width:57px;height:1px;background:#6a6a6a;"></div><div style="position:absolute;left:281px;top:823px;width:73px;height:22px;background:#dedede;"></div><div style="position:absolute;left:281px;top:845px;width:73px;height:1px;background:#c4c4c4;"></div><div style="position:absolute;left:223px;top:828px;white-space:nowrap;font-weight:bold;font-size:12px;letter-spacing:-0.2px;"><div style="width:57px;text-align:center;line-height:14px">b</div></div><div style="position:absolute;left:223px;top:846px;width:56px;height:22px;background:#f0f0f0;"></div><div style="position:absolute;left:223px;top:868px;width:57px;height:1px;background:#6a6a6a;"></div><div style="position:absolute;left:281px;top:846px;width:73px;height:22px;background:#fff;"></div><div style="position:absolute;left:281px;top:868px;width:73px;height:1px;background:#c4c4c4;"></div><div style="position:absolute;left:223px;top:851px;white-space:nowrap;font-weight:bold;font-size:12px;letter-spacing:-0.2px;"><div style="width:57px;text-align:center;line-height:14px">L</div></div><div style="position:absolute;left:223px;top:869px;width:56px;height:22px;background:#f0f0f0;"></div><div style="position:absolute;left:223px;top:891px;width:57px;height:1px;background:#6a6a6a;"></div><div style="position:absolute;left:281px;top:869px;width:73px;height:22px;background:#fff;"></div><div style="position:absolute;left:281px;top:891px;width:73px;height:1px;background:#c4c4c4;"></div><div style="position:absolute;left:223px;top:874px;white-space:nowrap;font-weight:bold;font-size:12px;letter-spacing:-0.2px;"><div style="width:57px;text-align:center;line-height:14px">C</div></div><div style="position:absolute;left:223px;top:892px;width:56px;height:22px;background:#f0f0f0;"></div><div style="position:absolute;left:223px;top:914px;width:57px;height:1px;background:#6a6a6a;"></div><div style="position:absolute;left:281px;top:892px;width:73px;height:22px;background:#fff;"></div><div style="position:absolute;left:281px;top:914px;width:73px;height:1px;background:#c4c4c4;"></div><div style="position:absolute;left:223px;top:897px;white-space:nowrap;font-weight:bold;font-size:12px;letter-spacing:-0.2px;"><div style="width:57px;text-align:center;line-height:14px">H</div></div><div style="position:absolute;left:223px;top:915px;width:56px;height:22px;background:#f0f0f0;"></div><div style="position:absolute;left:223px;top:937px;width:57px;height:1px;background:#6a6a6a;"></div><div style="position:absolute;left:281px;top:915px;width:73px;height:22px;background:#dedede;"></div><div style="position:absolute;left:281px;top:937px;width:73px;height:1px;background:#c4c4c4;"></div><div style="position:absolute;left:223px;top:920px;white-space:nowrap;font-weight:bold;font-size:12px;letter-spacing:-0.2px;"><div style="width:57px;text-align:center;line-height:14px">L</div></div><div style="position:absolute;left:280px;top:919px;white-space:nowrap;font-size:12px;"><div style="width:73px;text-align:right">0.05</div></div><div style="position:absolute;left:223px;top:938px;width:56px;height:22px;background:#f0f0f0;"></div><div style="position:absolute;left:223px;top:960px;width:57px;height:1px;background:#6a6a6a;"></div><div style="position:absolute;left:281px;top:938px;width:73px;height:22px;background:#dedede;"></div><div style="position:absolute;left:281px;top:960px;width:73px;height:1px;background:#c4c4c4;"></div><div style="position:absolute;left:223px;top:943px;white-space:nowrap;font-weight:bold;font-size:12px;letter-spacing:-0.2px;"><div style="width:57px;text-align:center;line-height:14px">M</div></div><div style="position:absolute;left:280px;top:942px;white-space:nowrap;font-size:12px;"><div style="width:73px;text-align:right">0.09</div></div><div style="position:absolute;left:223px;top:961px;width:56px;height:22px;background:#f0f0f0;"></div><div style="position:absolute;left:223px;top:983px;width:57px;height:1px;background:#6a6a6a;"></div><div style="position:absolute;left:281px;top:961px;width:73px;height:22px;background:#dedede;"></div><div style="position:absolute;left:281px;top:983px;width:73px;height:1px;background:#c4c4c4;"></div><div style="position:absolute;left:223px;top:966px;white-space:nowrap;font-weight:bold;font-size:12px;letter-spacing:-0.2px;"><div style="width:57px;text-align:center;line-height:14px">S</div></div><div style="position:absolute;left:280px;top:965px;white-space:nowrap;font-size:12px;"><div style="width:73px;text-align:right">0.17</div></div><div style="position:absolute;left:280px;top:432px;width:1px;height:552px;background:#6a6a6a;"></div><div style="position:absolute;left:221px;top:984px;width:133px;height:24px;background:#a0a0a0;"></div><div style="position:absolute;left:354px;top:433px;width:18px;height:575px;background:#f0f0f0;border-left:1px solid #fff;border-right:1px solid #fafafa;"></div><div style="position:absolute;left:363px;top:450px;width:3px;height:350px;background:#888;border-radius:1px;"></div><div style="position:absolute;left:391px;top:387px;width:1504px;height:629px;background:#ebebeb;border:2px solid #6f6f6f;border-right-width:2px;"></div><div style="position:absolute;left:393px;top:388px;width:1500px;height:18px;background:linear-gradient(90deg,#e3ebf6,#ebf0f8);border-radius:5px 5px 0 0;border-bottom:1px solid #9c9c9c;"></div><div style="position:absolute;left:398px;top:390px;white-space:nowrap;font-weight:bold;font-size:13px;color:#3a3a3a;letter-spacing:0.3px;">Information</div><div style="position:absolute;left:396px;top:409px;width:301px;height:24px;background:#fff;border:2px solid #7a7a7a;border-right-color:#e4e4e4;border-bottom-color:#e4e4e4;"></div><div style="position:absolute;left:399px;top:412px;width:280px;height:18px;background:#0078d7;"></div><div style="position:absolute;left:401px;top:413px;white-space:nowrap;font-size:13.5px;letter-spacing:0.45px;margin-top:1px;color:#fff;">Saturation Luminance - Shift</div><div style="position:absolute;left:679px;top:412px;width:16px;height:18px;background:#ececec;border:1px solid #fff;border-right-color:#6a6a6a;border-bottom-color:#6a6a6a;"></div><svg style="position:absolute;left:683px;top:419px" width="9" height="5" viewBox="0 0 9 5"><path d="M0 0 H9 L4.5 5 Z" fill="#000"/></svg><div style="position:absolute;left:398px;top:439px;width:748px;height:570px;background:#fff;border:2px solid #6e6e6e;border-right-color:#f4f4f4;border-bottom-color:#f4f4f4;"></div><div style="position:absolute;left:1146px;top:439px;width:747px;height:570px;background:#fff;border:2px solid #6e6e6e;border-right-color:#f4f4f4;border-bottom-color:#f4f4f4;"></div><div style="position:absolute;left:400px;top:441px;width:2px;height:563px;background:#a8a8a8;"></div><div style="position:absolute;left:400px;top:441px;width:742px;height:2px;background:#a8a8a8;"></div><div style="position:absolute;left:1148px;top:441px;width:2px;height:563px;background:#a8a8a8;"></div><div style="position:absolute;left:1148px;top:441px;width:742px;height:2px;background:#a8a8a8;"></div><svg style="position:absolute;left:402px;top:443px" width="740" height="561" viewBox="0 0 740 561"><defs><linearGradient id="g1" x1="0" y1="0" x2="1" y2="0"><stop offset="0.000%" stop-color="#1e1e1e"/><stop offset="9.990%" stop-color="#323232"/><stop offset="10.000%" stop-color="#353535"/><stop offset="19.990%" stop-color="#494949"/><stop offset="20.000%" stop-color="#4c4c4c"/><stop offset="29.990%" stop-color="#606060"/><stop offset="30.000%" stop-color="#636363"/><stop offset="39.990%" stop-color="#777777"/><stop offset="40.000%" stop-color="#7a7a7a"/><stop offset="49.990%" stop-color="#8e8e8e"/><stop offset="50.000%" stop-color="#919191"/><stop offset="59.990%" stop-color="#a5a5a5"/><stop offset="60.000%" stop-color="#a8a8a8"/><stop offset="69.990%" stop-color="#bcbcbc"/><stop offset="70.000%" stop-color="#bfbfbf"/><stop offset="79.990%" stop-color="#d3d3d3"/><stop offset="80.000%" stop-color="#d6d6d6"/><stop offset="89.990%" stop-color="#eaeaea"/><stop offset="90.000%" stop-color="#ededed"/><stop offset="99.990%" stop-color="#ffffff"/></linearGradient></defs><rect x="0" y="0" width="740" height="561" fill="url(#g1)"/><rect x="0" y="0" width="1" height="561" fill="#084848"/><rect x="0" y="0" width="740" height="1" fill="#084848"/><rect x="74" y="0" width="1" height="561" fill="#084848"/><rect x="148" y="0" width="1" height="561" fill="#084848"/><rect x="222" y="0" width="1" height="561" fill="#084848"/><rect x="296" y="0" width="1" height="561" fill="#084848"/><rect x="370" y="0" width="1" height="561" fill="#084848"/><rect x="444" y="0" width="1" height="561" fill="#084848"/><rect x="518" y="0" width="1" height="561" fill="#084848"/><rect x="592" y="0" width="1" height="561" fill="#084848"/><rect x="666" y="0" width="1" height="561" fill="#084848"/><rect x="0" y="505" width="740" height="1" fill="#084848"/><rect x="0" y="449" width="740" height="1" fill="#084848"/><rect x="0" y="393" width="740" height="1" fill="#084848"/><rect x="0" y="337" width="740" height="1" fill="#084848"/><rect x="0" y="280" width="740" height="1" fill="#084848"/><rect x="0" y="224" width="740" height="1" fill="#084848"/><rect x="0" y="168" width="740" height="1" fill="#084848"/><rect x="0" y="112" width="740" height="1" fill="#084848"/><rect x="0" y="56" width="740" height="1" fill="#084848"/><text x="2" y="502" font-family="'Liberation Serif', serif" font-size="14" fill="#e0e0e0">10%</text><text x="2" y="446" font-family="'Liberation Serif', serif" font-size="14" fill="#e0e0e0">20%</text><text x="2" y="390" font-family="'Liberation Serif', serif" font-size="14" fill="#e0e0e0">30%</text><text x="2" y="334" font-family="'Liberation Serif', serif" font-size="14" fill="#e0e0e0">40%</text><text x="2" y="277" font-family="'Liberation Serif', serif" font-size="14" fill="#e0e0e0">50%</text><text x="2" y="221" font-family="'Liberation Serif', serif" font-size="14" fill="#e0e0e0">60%</text><text x="2" y="165" font-family="'Liberation Serif', serif" font-size="14" fill="#e0e0e0">70%</text><text x="2" y="109" font-family="'Liberation Serif', serif" font-size="14" fill="#e0e0e0">80%</text><text x="2" y="53" font-family="'Liberation Serif', serif" font-size="14" fill="#e0e0e0">90%</text><text x="76" y="558" font-family="'Liberation Serif', serif" font-size="14" fill="#e8e8e8">10% Sat</text><text x="150" y="558" font-family="'Liberation Serif', serif" font-size="14" fill="#e0e0e0">20% Sat</text><text x="224" y="558" font-family="'Liberation Serif', serif" font-size="14" fill="#c8c8c8">30% Sat</text><text x="298" y="558" font-family="'Liberation Serif', serif" font-size="14" fill="#a8a8a8">40% Sat</text><text x="372" y="558" font-family="'Liberation Serif', serif" font-size="14" fill="#909090">50% Sat</text><text x="446" y="558" font-family="'Liberation Serif', serif" font-size="14" fill="#6e6e6e">60% Sat</text><text x="520" y="558" font-family="'Liberation Serif', serif" font-size="14" fill="#555555">70% Sat</text><text x="594" y="558" font-family="'Liberation Serif', serif" font-size="14" fill="#3c3c3c">80% Sat</text><text x="668" y="558" font-family="'Liberation Serif', serif" font-size="14" fill="#202020">90% Sat</text><text x="280" y="14" font-family="'Liberation Sans', sans-serif" font-weight="bold" font-size="14" letter-spacing="0.35" fill="#d8d800">Saturation Sweep Luminance</text><path d="M0.0 43.0 C30.8 43.3 123.3 45.9 185.0 46.0 C246.7 46.1 308.3 44.4 370.0 44.0 C431.7 43.6 493.3 43.3 555.0 42.0 C616.7 40.7 709.2 33.1 740.0 32.0" fill="none" stroke="#ffff00" stroke-width="2.2"/><rect x="-4" y="39" width="8" height="8" fill="#ffff00"/><rect x="181" y="42" width="8" height="8" fill="#ffff00"/><rect x="366" y="40" width="8" height="8" fill="#ffff00"/><rect x="551" y="38" width="8" height="8" fill="#ffff00"/><rect x="736" y="28" width="8" height="8" fill="#ffff00"/><path d="M0.0 41.0 C30.8 41.2 123.3 42.9 185.0 43.0 C246.7 43.1 308.3 42.3 370.0 42.0 C431.7 41.7 493.3 40.2 555.0 40.0 C616.7 39.8 709.2 40.0 740.0 40.0" fill="none" stroke="#808000" stroke-width="1.2" stroke-dasharray="3 3"/><rect x="-4" y="37" width="8" height="8" fill="#808000"/><rect x="181" y="39" width="8" height="8" fill="#808000"/><rect x="366" y="38" width="8" height="8" fill="#808000"/><rect x="551" y="36" width="8" height="8" fill="#808000"/><rect x="736" y="36" width="8" height="8" fill="#808000"/><path d="M0.0 116.0 C30.8 115.9 123.3 115.3 185.0 115.0 C246.7 114.7 308.3 113.8 370.0 113.0 C431.7 112.2 493.3 107.0 555.0 108.0 C616.7 109.0 709.2 120.4 740.0 122.0" fill="none" stroke="#00ffff" stroke-width="2.2"/><rect x="-4" y="112" width="8" height="8" fill="#00ffff"/><rect x="181" y="111" width="8" height="8" fill="#00ffff"/><rect x="366" y="109" width="8" height="8" fill="#00ffff"/><rect x="551" y="104" width="8" height="8" fill="#00ffff"/><rect x="736" y="118" width="8" height="8" fill="#00ffff"/><path d="M0.0 126.0 C30.8 125.9 123.3 124.9 185.0 125.0 C246.7 125.1 308.3 127.3 370.0 127.0 C431.7 126.7 493.3 122.9 555.0 122.0 C616.7 121.1 709.2 119.3 740.0 119.0" fill="none" stroke="#008080" stroke-width="1.2" stroke-dasharray="3 3"/><rect x="-4" y="122" width="8" height="8" fill="#008080"/><rect x="181" y="121" width="8" height="8" fill="#008080"/><rect x="366" y="123" width="8" height="8" fill="#008080"/><rect x="551" y="118" width="8" height="8" fill="#008080"/><rect x="736" y="115" width="8" height="8" fill="#008080"/><path d="M0.0 155.0 C30.8 155.3 123.3 158.1 185.0 158.0 C246.7 157.9 308.3 153.6 370.0 154.0 C431.7 154.4 493.3 161.7 555.0 162.0 C616.7 162.3 709.2 157.6 740.0 157.0" fill="none" stroke="#00ff00" stroke-width="2.2"/><rect x="-4" y="151" width="8" height="8" fill="#00ff00"/><rect x="181" y="154" width="8" height="8" fill="#00ff00"/><rect x="366" y="150" width="8" height="8" fill="#00ff00"/><rect x="551" y="158" width="8" height="8" fill="#00ff00"/><rect x="736" y="153" width="8" height="8" fill="#00ff00"/><path d="M0.0 171.0 C30.8 170.7 123.3 168.6 185.0 168.0 C246.7 167.4 308.3 166.7 370.0 166.0 C431.7 165.3 493.3 162.7 555.0 162.0 C616.7 161.3 709.2 160.2 740.0 160.0" fill="none" stroke="#008000" stroke-width="1.2" stroke-dasharray="3 3"/><rect x="-4" y="167" width="8" height="8" fill="#008000"/><rect x="181" y="164" width="8" height="8" fill="#008000"/><rect x="366" y="162" width="8" height="8" fill="#008000"/><rect x="551" y="158" width="8" height="8" fill="#008000"/><rect x="736" y="156" width="8" height="8" fill="#008000"/><path d="M0.0 406.0 C30.8 405.9 123.3 406.1 185.0 405.0 C246.7 403.9 308.3 397.9 370.0 396.0 C431.7 394.1 493.3 387.6 555.0 388.0 C616.7 388.4 709.2 398.7 740.0 400.0" fill="none" stroke="#ff00ff" stroke-width="2.2"/><rect x="-4" y="402" width="8" height="8" fill="#ff00ff"/><rect x="181" y="401" width="8" height="8" fill="#ff00ff"/><rect x="366" y="392" width="8" height="8" fill="#ff00ff"/><rect x="551" y="384" width="8" height="8" fill="#ff00ff"/><rect x="736" y="396" width="8" height="8" fill="#ff00ff"/><path d="M0.0 418.0 C30.8 417.8 123.3 416.3 185.0 416.0 C246.7 415.7 308.3 415.4 370.0 415.0 C431.7 414.6 493.3 413.6 555.0 412.0 C616.7 410.4 709.2 402.2 740.0 401.0" fill="none" stroke="#800080" stroke-width="1.2" stroke-dasharray="3 3"/><rect x="-4" y="414" width="8" height="8" fill="#800080"/><rect x="181" y="412" width="8" height="8" fill="#800080"/><rect x="366" y="411" width="8" height="8" fill="#800080"/><rect x="551" y="408" width="8" height="8" fill="#800080"/><rect x="736" y="397" width="8" height="8" fill="#800080"/><path d="M0.0 446.0 C30.8 445.4 123.3 442.6 185.0 441.0 C246.7 439.4 308.3 433.9 370.0 432.0 C431.7 430.1 493.3 423.8 555.0 424.0 C616.7 424.2 709.2 432.9 740.0 434.0" fill="none" stroke="#ff0000" stroke-width="2.2"/><rect x="-4" y="442" width="8" height="8" fill="#ff0000"/><rect x="181" y="437" width="8" height="8" fill="#ff0000"/><rect x="366" y="428" width="8" height="8" fill="#ff0000"/><rect x="551" y="420" width="8" height="8" fill="#ff0000"/><rect x="736" y="430" width="8" height="8" fill="#ff0000"/><path d="M0.0 456.0 C30.8 455.8 123.3 454.4 185.0 454.0 C246.7 453.6 308.3 452.6 370.0 452.0 C431.7 451.4 493.3 450.2 555.0 449.0 C616.7 447.8 709.2 441.9 740.0 441.0" fill="none" stroke="#800000" stroke-width="1.2" stroke-dasharray="3 3"/><rect x="-4" y="452" width="8" height="8" fill="#800000"/><rect x="181" y="450" width="8" height="8" fill="#800000"/><rect x="366" y="448" width="8" height="8" fill="#800000"/><rect x="551" y="445" width="8" height="8" fill="#800000"/><rect x="736" y="437" width="8" height="8" fill="#800000"/><path d="M0.0 521.0 C30.8 520.9 123.3 520.0 185.0 520.0 C246.7 520.0 308.3 521.3 370.0 521.0 C431.7 520.7 493.3 518.3 555.0 517.0 C616.7 515.7 709.2 509.9 740.0 509.0" fill="none" stroke="#0000ff" stroke-width="2.2"/><rect x="-4" y="517" width="8" height="8" fill="#0000ff"/><rect x="181" y="516" width="8" height="8" fill="#0000ff"/><rect x="366" y="517" width="8" height="8" fill="#0000ff"/><rect x="551" y="513" width="8" height="8" fill="#0000ff"/><rect x="736" y="505" width="8" height="8" fill="#0000ff"/><path d="M0.0 529.0 C30.8 529.0 123.3 529.0 185.0 529.0 C246.7 529.0 308.3 529.2 370.0 529.0 C431.7 528.8 493.3 527.9 555.0 527.0 C616.7 526.1 709.2 521.7 740.0 521.0" fill="none" stroke="#000080" stroke-width="1.2" stroke-dasharray="3 3"/><rect x="-4" y="525" width="8" height="8" fill="#000080"/><rect x="181" y="525" width="8" height="8" fill="#000080"/><rect x="366" y="525" width="8" height="8" fill="#000080"/><rect x="551" y="523" width="8" height="8" fill="#000080"/><rect x="736" y="517" width="8" height="8" fill="#000080"/><text x="576" y="521" font-family="'Liberation Sans', sans-serif" font-weight="bold" font-size="15.5" fill="#8c8c8c" fill-opacity="0.65">hcfr.sourceforge.net</text></svg><svg style="position:absolute;left:1150px;top:443px" width="740" height="561" viewBox="0 0 740 561"><defs><linearGradient id="g2" x1="0" y1="0" x2="1" y2="0"><stop offset="0.000%" stop-color="#1e1e1e"/><stop offset="9.990%" stop-color="#323232"/><stop offset="10.000%" stop-color="#353535"/><stop offset="19.990%" stop-color="#494949"/><stop offset="20.000%" stop-color="#4c4c4c"/><stop offset="29.990%" stop-color="#606060"/><stop offset="30.000%" stop-color="#636363"/><stop offset="39.990%" stop-color="#777777"/><stop offset="40.000%" stop-color="#7a7a7a"/><stop offset="49.990%" stop-color="#8e8e8e"/><stop offset="50.000%" stop-color="#919191"/><stop offset="59.990%" stop-color="#a5a5a5"/><stop offset="60.000%" stop-color="#a8a8a8"/><stop offset="69.990%" stop-color="#bcbcbc"/><stop offset="70.000%" stop-color="#bfbfbf"/><stop offset="79.990%" stop-color="#d3d3d3"/><stop offset="80.000%" stop-color="#d6d6d6"/><stop offset="89.990%" stop-color="#eaeaea"/><stop offset="90.000%" stop-color="#ededed"/><stop offset="99.990%" stop-color="#ffffff"/></linearGradient></defs><rect x="0" y="0" width="740" height="561" fill="url(#g2)"/><rect x="0" y="0" width="1" height="561" fill="#084848"/><rect x="0" y="0" width="740" height="1" fill="#084848"/><rect x="74" y="0" width="1" height="561" fill="#084848"/><rect x="148" y="0" width="1" height="561" fill="#084848"/><rect x="222" y="0" width="1" height="561" fill="#084848"/><rect x="296" y="0" width="1" height="561" fill="#084848"/><rect x="370" y="0" width="1" height="561" fill="#084848"/><rect x="444" y="0" width="1" height="561" fill="#084848"/><rect x="518" y="0" width="1" height="561" fill="#084848"/><rect x="592" y="0" width="1" height="561" fill="#084848"/><rect x="666" y="0" width="1" height="561" fill="#084848"/><rect x="0" y="35" width="740" height="1" fill="#084848"/><rect x="0" y="70" width="740" height="1" fill="#084848"/><rect x="0" y="105" width="740" height="1" fill="#084848"/><rect x="0" y="140" width="740" height="1" fill="#084848"/><rect x="0" y="175" width="740" height="1" fill="#084848"/><rect x="0" y="210" width="740" height="1" fill="#084848"/><rect x="0" y="245" width="740" height="1" fill="#084848"/><rect x="0" y="533" width="740" height="1" fill="#084848"/><rect x="0" y="505" width="740" height="1" fill="#084848"/><rect x="0" y="477" width="740" height="1" fill="#084848"/><rect x="0" y="449" width="740" height="1" fill="#084848"/><rect x="0" y="421" width="740" height="1" fill="#084848"/><rect x="0" y="393" width="740" height="1" fill="#084848"/><rect x="0" y="365" width="740" height="1" fill="#084848"/><rect x="0" y="337" width="740" height="1" fill="#084848"/><rect x="0" y="309" width="740" height="1" fill="#084848"/><text x="2" y="32" font-family="'Liberation Serif', serif" font-size="14" fill="#e0e0e0">15%</text><text x="2" y="67" font-family="'Liberation Serif', serif" font-size="14" fill="#e0e0e0">10%</text><text x="2" y="102" font-family="'Liberation Serif', serif" font-size="14" fill="#e0e0e0">5%</text><text x="2" y="137" font-family="'Liberation Serif', serif" font-size="14" fill="#e0e0e0">0%</text><text x="2" y="172" font-family="'Liberation Serif', serif" font-size="14" fill="#e0e0e0">-5%</text><text x="2" y="207" font-family="'Liberation Serif', serif" font-size="14" fill="#e0e0e0">-10%</text><text x="2" y="242" font-family="'Liberation Serif', serif" font-size="14" fill="#e0e0e0">-15%</text><text x="2" y="530" font-family="'Liberation Serif', serif" font-size="14" fill="#e0e0e0">2</text><text x="2" y="502" font-family="'Liberation Serif', serif" font-size="14" fill="#e0e0e0">4</text><text x="2" y="474" font-family="'Liberation Serif', serif" font-size="14" fill="#e0e0e0">6</text><text x="2" y="446" font-family="'Liberation Serif', serif" font-size="14" fill="#e0e0e0">8</text><text x="2" y="418" font-family="'Liberation Serif', serif" font-size="14" fill="#e0e0e0">10</text><text x="2" y="390" font-family="'Liberation Serif', serif" font-size="14" fill="#e0e0e0">12</text><text x="2" y="362" font-family="'Liberation Serif', serif" font-size="14" fill="#e0e0e0">14</text><text x="2" y="334" font-family="'Liberation Serif', serif" font-size="14" fill="#e0e0e0">16</text><text x="2" y="306" font-family="'Liberation Serif', serif" font-size="14" fill="#e0e0e0">18</text><text x="76" y="558" font-family="'Liberation Serif', serif" font-size="14" fill="#e8e8e8">10% Sat</text><text x="150" y="558" font-family="'Liberation Serif', serif" font-size="14" fill="#e0e0e0">20% Sat</text><text x="224" y="558" font-family="'Liberation Serif', serif" font-size="14" fill="#c8c8c8">30% Sat</text><text x="298" y="558" font-family="'Liberation Serif', serif" font-size="14" fill="#a8a8a8">40% Sat</text><text x="372" y="558" font-family="'Liberation Serif', serif" font-size="14" fill="#909090">50% Sat</text><text x="446" y="558" font-family="'Liberation Serif', serif" font-size="14" fill="#6e6e6e">60% Sat</text><text x="520" y="558" font-family="'Liberation Serif', serif" font-size="14" fill="#555555">70% Sat</text><text x="594" y="558" font-family="'Liberation Serif', serif" font-size="14" fill="#3c3c3c">80% Sat</text><text x="668" y="558" font-family="'Liberation Serif', serif" font-size="14" fill="#202020">90% Sat</text><text x="76" y="278" font-family="'Liberation Serif', serif" font-size="14" fill="#e8e8e8">10% Sat</text><text x="150" y="278" font-family="'Liberation Serif', serif" font-size="14" fill="#e0e0e0">20% Sat</text><text x="224" y="278" font-family="'Liberation Serif', serif" font-size="14" fill="#c8c8c8">30% Sat</text><text x="298" y="278" font-family="'Liberation Serif', serif" font-size="14" fill="#a8a8a8">40% Sat</text><text x="372" y="278" font-family="'Liberation Serif', serif" font-size="14" fill="#909090">50% Sat</text><text x="446" y="278" font-family="'Liberation Serif', serif" font-size="14" fill="#6e6e6e">60% Sat</text><text x="520" y="278" font-family="'Liberation Serif', serif" font-size="14" fill="#555555">70% Sat</text><text x="594" y="278" font-family="'Liberation Serif', serif" font-size="14" fill="#3c3c3c">80% Sat</text><text x="668" y="278" font-family="'Liberation Serif', serif" font-size="14" fill="#202020">90% Sat</text><text x="294" y="14" font-family="'Liberation Sans', sans-serif" font-weight="bold" font-size="14" letter-spacing="0.35" fill="#d8d800">Saturation Scan Shifts</text><line x1="0" y1="140.5" x2="740" y2="140.5" stroke="#fff" stroke-width="1" stroke-dasharray="3 2"/><rect x="-4" y="136" width="8" height="8" fill="#f0f0f0"/><path d="M0.0 93.0 L185.0 93.0 L370.0 80.0 L555.0 95.0 L740.0 133.0" fill="none" stroke="#00ffff" stroke-width="2.2"/><rect x="-4" y="89" width="8" height="8" fill="#00ffff"/><rect x="181" y="89" width="8" height="8" fill="#00ffff"/><rect x="366" y="76" width="8" height="8" fill="#00ffff"/><rect x="551" y="91" width="8" height="8" fill="#00ffff"/><rect x="736" y="129" width="8" height="8" fill="#00ffff"/><path d="M0.0 122.0 L185.0 112.0 L370.0 86.0 L555.0 94.0 L740.0 129.0" fill="none" stroke="#ff00ff" stroke-width="2.2"/><rect x="-4" y="118" width="8" height="8" fill="#ff00ff"/><rect x="181" y="108" width="8" height="8" fill="#ff00ff"/><rect x="366" y="82" width="8" height="8" fill="#ff00ff"/><rect x="551" y="90" width="8" height="8" fill="#ff00ff"/><rect x="736" y="125" width="8" height="8" fill="#ff00ff"/><path d="M0.0 102.0 L185.0 125.0 L370.0 136.0 L555.0 128.0 L740.0 147.0" fill="none" stroke="#0000ff" stroke-width="2.2"/><rect x="-4" y="98" width="8" height="8" fill="#0000ff"/><rect x="181" y="121" width="8" height="8" fill="#0000ff"/><rect x="366" y="132" width="8" height="8" fill="#0000ff"/><rect x="551" y="124" width="8" height="8" fill="#0000ff"/><rect x="736" y="143" width="8" height="8" fill="#0000ff"/><path d="M0.0 146.0 L185.0 123.0 L370.0 123.0 L555.0 163.0 L740.0 163.0" fill="none" stroke="#ff0000" stroke-width="2.2"/><rect x="-4" y="142" width="8" height="8" fill="#ff0000"/><rect x="181" y="119" width="8" height="8" fill="#ff0000"/><rect x="366" y="119" width="8" height="8" fill="#ff0000"/><rect x="551" y="159" width="8" height="8" fill="#ff0000"/><rect x="736" y="159" width="8" height="8" fill="#ff0000"/><path d="M0.0 157.0 L185.0 125.0 L370.0 113.0 L555.0 192.0 L740.0 168.0" fill="none" stroke="#00ff00" stroke-width="2.2"/><rect x="-4" y="153" width="8" height="8" fill="#00ff00"/><rect x="181" y="121" width="8" height="8" fill="#00ff00"/><rect x="366" y="109" width="8" height="8" fill="#00ff00"/><rect x="551" y="188" width="8" height="8" fill="#00ff00"/><rect x="736" y="164" width="8" height="8" fill="#00ff00"/><path d="M0.0 177.0 L185.0 145.0 L370.0 106.0 L555.0 116.0 L740.0 162.0" fill="none" stroke="#ffff00" stroke-width="2.2"/><rect x="-4" y="173" width="8" height="8" fill="#ffff00"/><rect x="181" y="141" width="8" height="8" fill="#ffff00"/><rect x="366" y="102" width="8" height="8" fill="#ffff00"/><rect x="551" y="112" width="8" height="8" fill="#ffff00"/><rect x="736" y="158" width="8" height="8" fill="#ffff00"/><path d="M0.0 509.0 L185.0 514.0 L370.0 523.0 L555.0 508.0 L740.0 512.0" fill="none" stroke="#0000ff" stroke-width="2.2"/><rect x="-4" y="505" width="8" height="8" fill="#0000ff"/><rect x="181" y="510" width="8" height="8" fill="#0000ff"/><rect x="366" y="519" width="8" height="8" fill="#0000ff"/><rect x="551" y="504" width="8" height="8" fill="#0000ff"/><rect x="736" y="508" width="8" height="8" fill="#0000ff"/><path d="M0.0 508.0 L185.0 498.0 L370.0 509.0 L555.0 512.0 L740.0 514.0" fill="none" stroke="#00ffff" stroke-width="2.2"/><rect x="-4" y="504" width="8" height="8" fill="#00ffff"/><rect x="181" y="494" width="8" height="8" fill="#00ffff"/><rect x="366" y="505" width="8" height="8" fill="#00ffff"/><rect x="551" y="508" width="8" height="8" fill="#00ffff"/><rect x="736" y="510" width="8" height="8" fill="#00ffff"/><path d="M0.0 514.0 L185.0 545.0 L370.0 541.0 L555.0 538.0 L740.0 551.0" fill="none" stroke="#00ff00" stroke-width="2.2"/><rect x="-4" y="510" width="8" height="8" fill="#00ff00"/><rect x="181" y="541" width="8" height="8" fill="#00ff00"/><rect x="366" y="537" width="8" height="8" fill="#00ff00"/><rect x="551" y="534" width="8" height="8" fill="#00ff00"/><rect x="736" y="547" width="8" height="8" fill="#00ff00"/><path d="M0.0 498.0 L185.0 554.0 L370.0 542.0 L555.0 550.0 L740.0 542.0" fill="none" stroke="#ffff00" stroke-width="2.2"/><rect x="-4" y="494" width="8" height="8" fill="#ffff00"/><rect x="181" y="550" width="8" height="8" fill="#ffff00"/><rect x="366" y="538" width="8" height="8" fill="#ffff00"/><rect x="551" y="546" width="8" height="8" fill="#ffff00"/><rect x="736" y="538" width="8" height="8" fill="#ffff00"/><path d="M0.0 514.0 L185.0 510.0 L370.0 498.0 L555.0 491.0 L740.0 538.0" fill="none" stroke="#ff0000" stroke-width="2.2"/><rect x="-4" y="510" width="8" height="8" fill="#ff0000"/><rect x="181" y="506" width="8" height="8" fill="#ff0000"/><rect x="366" y="494" width="8" height="8" fill="#ff0000"/><rect x="551" y="487" width="8" height="8" fill="#ff0000"/><rect x="736" y="534" width="8" height="8" fill="#ff0000"/><path d="M0.0 520.0 L185.0 521.0 L370.0 503.0 L555.0 503.0 L740.0 551.0" fill="none" stroke="#ff00ff" stroke-width="2.2"/><rect x="-4" y="516" width="8" height="8" fill="#ff00ff"/><rect x="181" y="517" width="8" height="8" fill="#ff00ff"/><rect x="366" y="499" width="8" height="8" fill="#ff00ff"/><rect x="551" y="499" width="8" height="8" fill="#ff00ff"/><rect x="736" y="547" width="8" height="8" fill="#ff00ff"/><text x="576" y="521" font-family="'Liberation Sans', sans-serif" font-weight="bold" font-size="15.5" fill="#8c8c8c" fill-opacity="0.65">hcfr.sourceforge.net</text></svg><div style="position:absolute;left:2px;top:1016px;width:1899px;height:26px;background:#f0f0f0;"></div><div style="position:absolute;left:2px;top:1016px;width:1894px;height:1px;background:#fbfbfb;"></div><div style="position:absolute;left:2px;top:1017px;width:1896px;height:2px;background:#6e6e6e;"></div><div style="position:absolute;left:2px;top:1019px;width:1899px;height:3px;background:#b0b0b0;"></div><div style="position:absolute;left:1896px;top:90px;width:2px;height:929px;background:#6e6e6e;"></div><div style="position:absolute;left:1898px;top:90px;width:3px;height:932px;background:#9a9a9a;"></div><div style="position:absolute;left:19px;top:1030px;width:1825px;height:2px;background:#8a8a8a;"></div><div style="position:absolute;left:0px;top:1042px;width:1920px;height:1px;background:#000;"></div><div style="position:absolute;left:0px;top:1043px;width:1920px;height:18px;background:#f0f0f0;"></div><svg style="position:absolute;left:0;top:1042px" width="330" height="19" viewBox="0 0 330 19"><rect x="0" y="0" width="54" height="19" fill="#f0f0f0"/><path d="M0.5 18.5 H53.5 V0.5" fill="none" stroke="#000"/><path d="M17.5 1 V18 M35.5 1 V18" stroke="#000"/><path d="M0.5 18 V0.5 H53" fill="none" stroke="#fff"/><path d="M4.5 4.5 L12.5 12.5 M12.5 4.5 L4.5 12.5" stroke="#000" stroke-width="1.3"/><path d="M28 5 L24 8.5 L28 12 Z" fill="#000"/><path d="M42 5 L46 8.5 L42 12 Z" fill="#000"/><path d="M55 0 L63.5 18.5 L120 18.5 L128.5 0 Z" fill="#fff"/><path d="M55 0 L63.5 18.5 L120 18.5 L128.5 0" fill="none" stroke="#000"/><path d="M120 0 L128.5 18.5 L172 18.5 L180.5 0 M172 0 L180.5 18.5 L239 18.5 L247.5 0 M239 0 L247.5 18.5 L313 18.5 L321.5 0" fill="none" stroke="#000"/></svg><div style="position:absolute;left:65px;top:1045px;white-space:nowrap;font-size:11px;font-weight:bold;letter-spacing:0.1px;">Measures</div><div style="position:absolute;left:131px;top:1045px;white-space:nowrap;font-size:10.5px;letter-spacing:-0.4px;">Gamma</div><div style="position:absolute;left:185px;top:1045px;white-space:nowrap;font-size:10.5px;letter-spacing:-0.5px;">Luminance</div><div style="position:absolute;left:254px;top:1045px;white-space:nowrap;font-size:10.5px;letter-spacing:-0.4px;">RGB Levels</div><svg style="position:absolute;left:1750px;top:1043px" width="16" height="16" viewBox="0 0 16 16"><path d="M1.5 1.5 H14.5 V10 L13.5 14 H11 L9.5 11.5 H6.5 L5 14 H2.5 L1.5 10 Z" fill="#7a7a00" stroke="#000" stroke-width="1"/><path d="M3 5 Q5 3 8 4 L8 2.5 L12 5 L8 8 L8 6 Q5 6 4 7 Z" fill="#ff2020"/><path d="M4 6 H12 V7.5 H4 Z" fill="#fff" opacity="0.6"/><path d="M9.5 10.5 H14 L13 14 H10.5 Z" fill="#ffff00" stroke="#000" stroke-width="0.8"/></svg><div style="position:absolute;left:1846px;top:1044px;width:13px;height:13px;background:#fff;border:1px solid #707070;border-right-color:#e0e0e0;border-bottom-color:#e0e0e0;"></div><div style="position:absolute;left:1865px;top:1044px;white-space:nowrap;font-size:12px;letter-spacing:-0.6px;">Reference</div><div style="position:absolute;left:0px;top:1061px;width:1920px;height:19px;background:linear-gradient(90deg,#eef3fa 0%,#e6edf6 30%,#e4ebf5 100%);"></div><div style="position:absolute;left:3px;top:1064px;white-space:nowrap;font-size:12.5px;letter-spacing:-0.2px;">Ready</div><div style="position:absolute;left:1742px;top:1063px;width:78px;height:17px;border:1px solid #a8b8cc;border-bottom:none;border-right-color:#f8fbff;"></div><div style="position:absolute;left:1821px;top:1063px;width:30px;height:17px;border:1px solid #a8b8cc;border-bottom:none;border-right-color:#f8fbff;"></div><div style="position:absolute;left:1823px;top:1064px;white-space:nowrap;font-size:12.5px;letter-spacing:-0.2px;">CAP</div><div style="position:absolute;left:1852px;top:1063px;width:33px;height:17px;border:1px solid #a8b8cc;border-bottom:none;border-right-color:#f8fbff;"></div><div style="position:absolute;left:1854px;top:1064px;white-space:nowrap;font-size:12.5px;letter-spacing:-0.2px;">NUM</div><div style="position:absolute;left:1887px;top:1063px;width:33px;height:17px;border:1px solid #a8b8cc;border-bottom:none;border-right-color:#f8fbff;"></div></body></html>
